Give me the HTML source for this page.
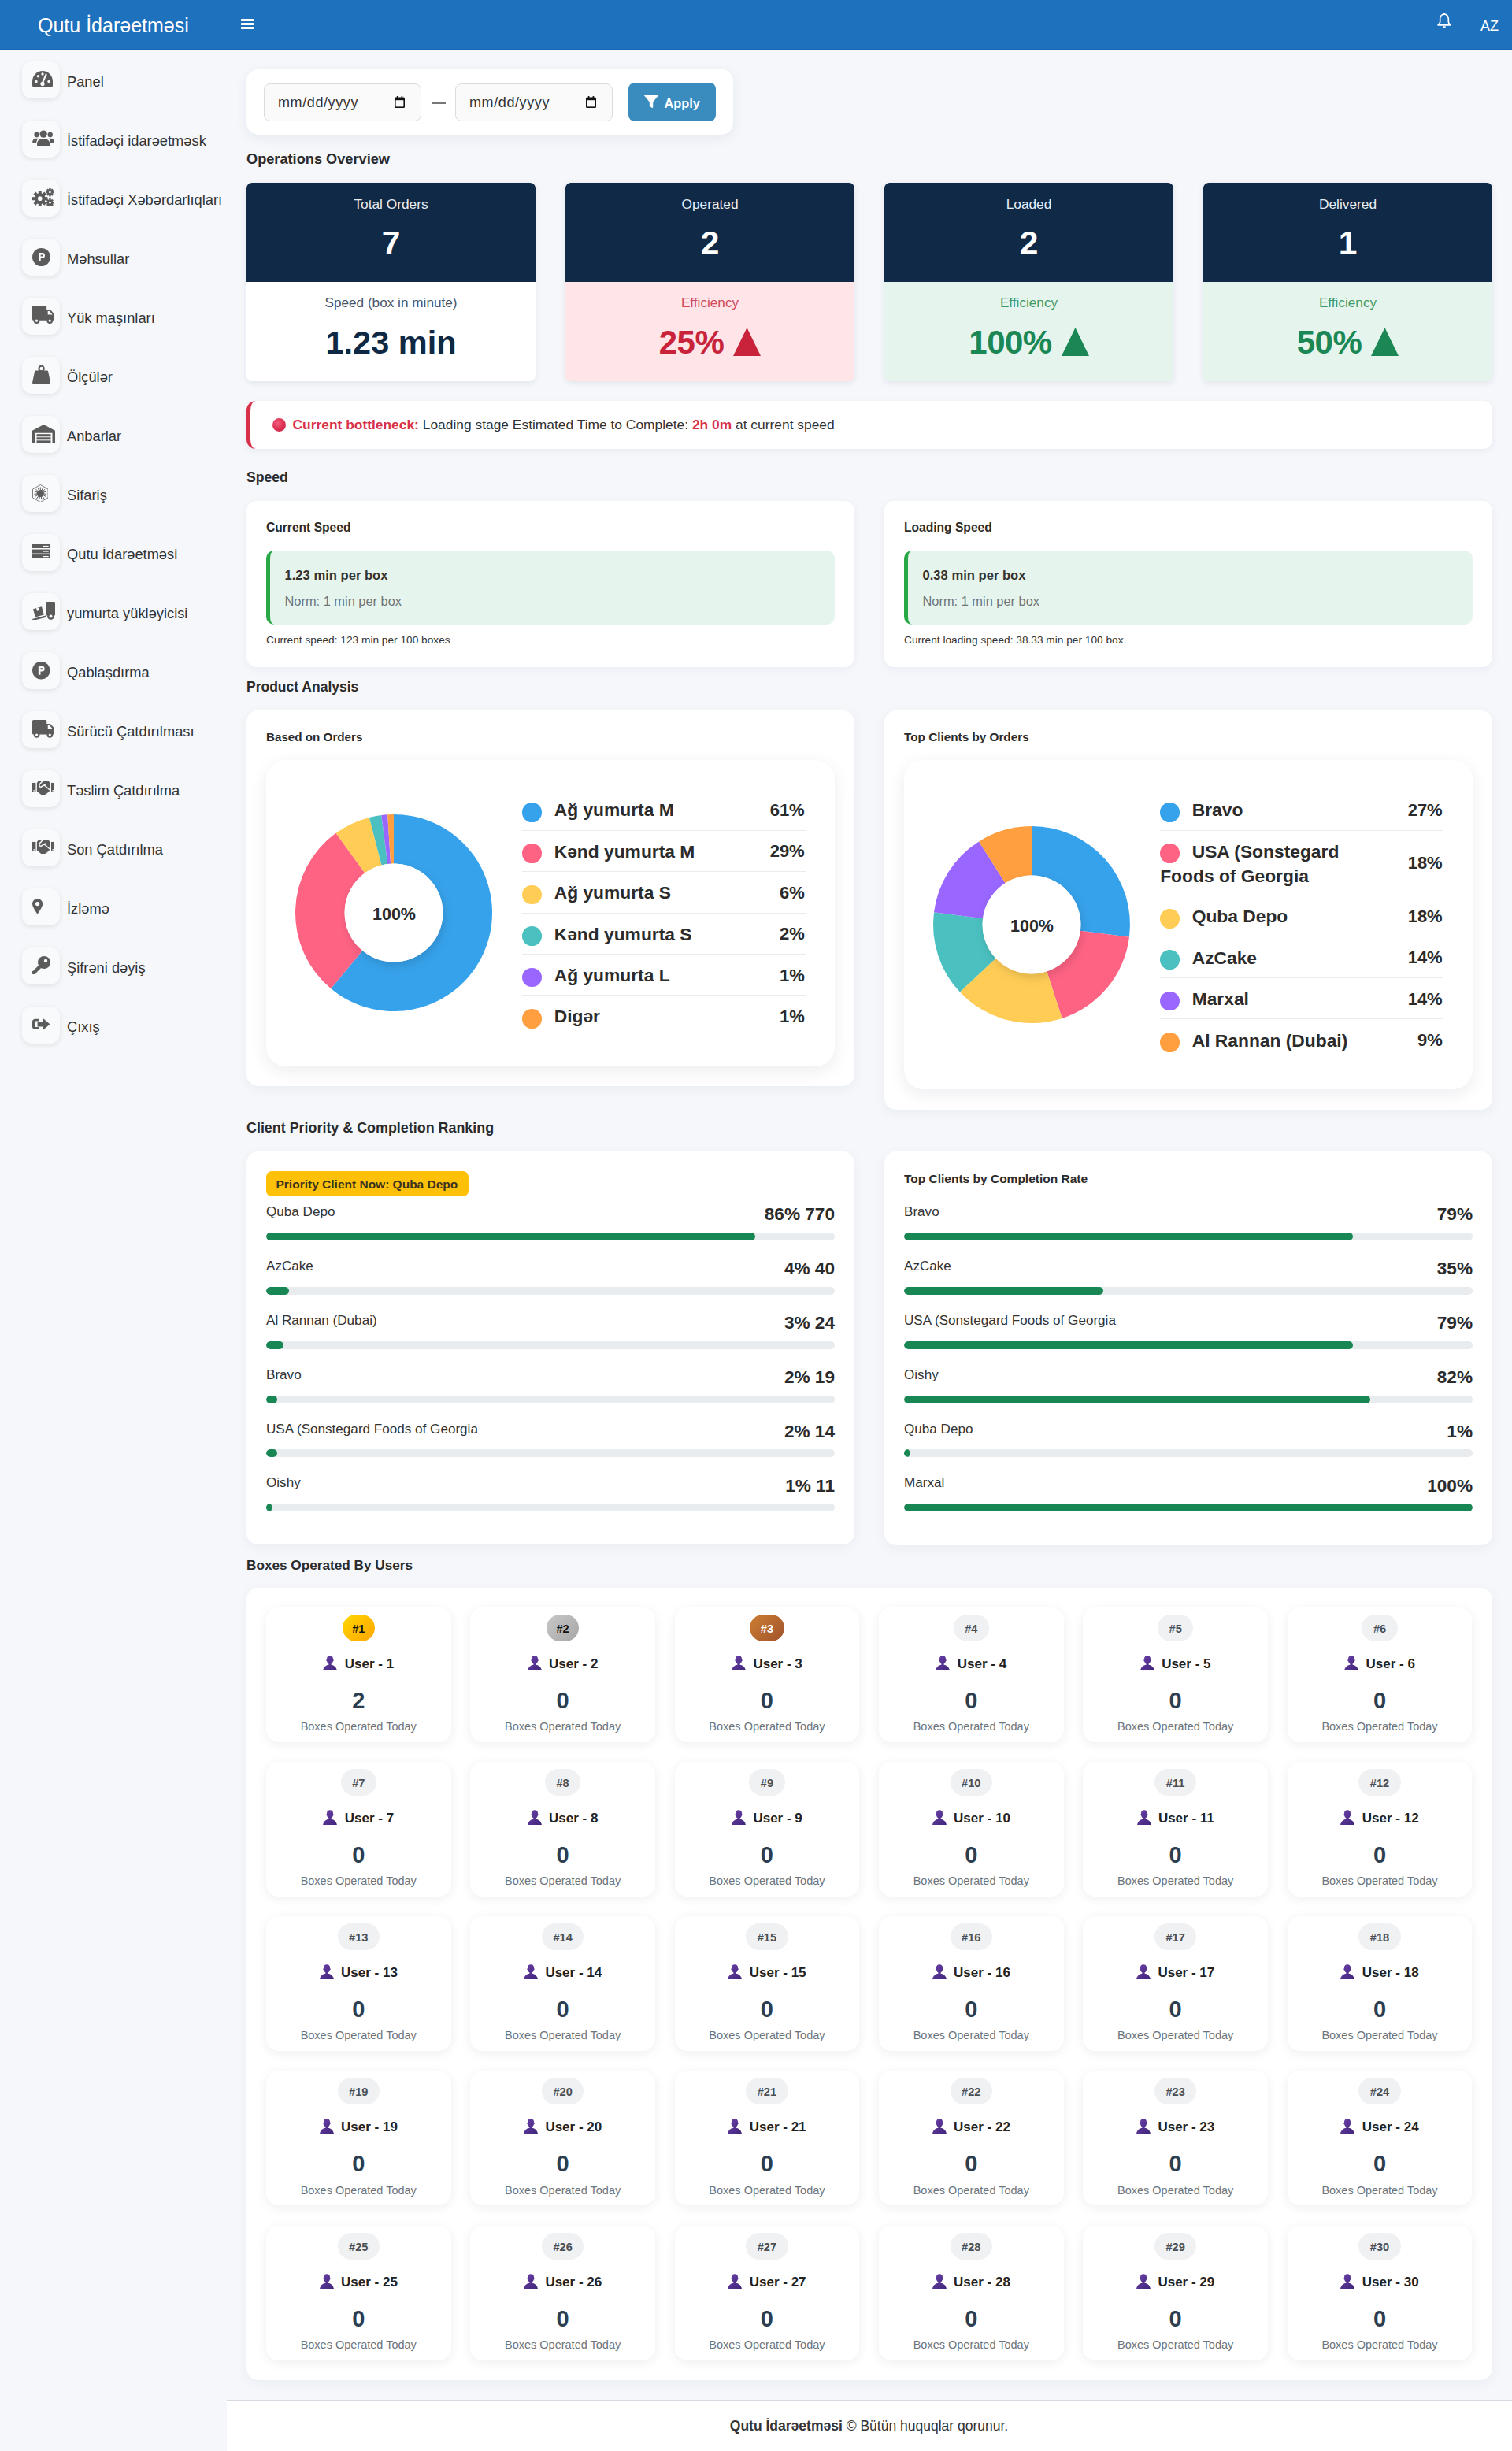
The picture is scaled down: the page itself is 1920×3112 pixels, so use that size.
<!DOCTYPE html>
<html lang="az">
<head>
<meta charset="utf-8">
<title>Qutu İdarəetməsi</title>
<style>
*{box-sizing:border-box;margin:0;padding:0}
html,body{width:1920px;height:3112px;overflow:hidden}
body{background:#f5f7fb;font-family:"Liberation Sans",sans-serif;color:#212529;position:relative}
.abs{position:absolute}
.t{position:absolute;white-space:nowrap}
/* header */
.hdr{position:absolute;left:0;top:0;width:1920px;height:62px;background:#1e71bd;box-shadow:0 1px 0 #1466b3,0 2px 0 #fbfcfd}
.brand{position:absolute;left:48px;top:17px;font-size:25px;color:#fff;line-height:30px;white-space:nowrap}
.burger{position:absolute;left:306px;top:24px;width:16px;height:14px}
.burger i{display:block;height:3px;background:#fff;margin-bottom:2px;border-radius:.5px}
.bell{position:absolute;left:1824px;top:16px;width:20px;height:21px}
.lang{position:absolute;left:1880px;top:23px;font-size:18px;color:#fff;line-height:20px}
/* sidebar */
.side{position:absolute;left:0;top:63px;width:287px;height:3049px}
.nav{position:absolute;left:28px;height:47px;width:260px}
.nav .ib{position:absolute;left:0;top:0;width:47.6px;height:47px;border-radius:12px;background:#f9fafb;box-shadow:0 2px 6px rgba(0,0,0,.09)}
.nav .tx{position:absolute;left:57px;top:15.3px;font-size:18.3px;color:#333;white-space:nowrap;line-height:22px}
/* main */
.card{position:absolute;background:#fff;border-radius:15px;box-shadow:0 4px 14px rgba(20,30,60,.06)}
.h{position:absolute;left:313px;font-size:18px;font-weight:700;color:#2d2d2d;white-space:nowrap;line-height:22px}
</style>
</head>
<body>
<div class="hdr">
  <div class="brand">Qutu İdarəetməsi</div>
  <div class="burger"><i></i><i></i><i></i></div>
  <svg class="bell" viewBox="0 0 20 21"><path d="M10 2.2c-3.2 0-5.3 2.5-5.3 5.6v3.6c0 1.3-.6 2.6-1.8 3.6l-.9.8h16l-.9-.8c-1.2-1-1.8-2.3-1.8-3.6V7.8c0-3.1-2.1-5.6-5.3-5.6z" fill="none" stroke="#fff" stroke-width="1.7" stroke-linejoin="round"/><circle cx="10" cy="1.6" r="1.1" fill="#fff"/><path d="M8 17.2a2 2 0 0 0 4 0z" fill="#fff"/></svg>
  <div class="lang">AZ</div>
</div>

<div id="side"><div class="side">
<div class="nav" style="top:15px"><div class="ib"><svg style="position:absolute;left:12.7px;top:12px" width="26" height="20.6" viewBox="0 0 26 20" preserveAspectRatio="none"><path d="M13 0A13 13 0 0 0 0 13v5a2 2 0 0 0 2 2h22a2 2 0 0 0 2-2v-5A13 13 0 0 0 13 0z" fill="#5b5b5b"/><circle cx="5" cy="13" r="1.7" fill="#f9fafb"/><circle cx="7.5" cy="6.5" r="1.7" fill="#f9fafb"/><circle cx="13" cy="4" r="1.7" fill="#f9fafb"/><circle cx="21" cy="13" r="1.7" fill="#f9fafb"/><path d="M17.5 4.5l-4.2 9.5" stroke="#f9fafb" stroke-width="2.2" stroke-linecap="round"/><circle cx="13" cy="16" r="2.6" fill="#f9fafb"/></svg></div><div class="tx">Panel</div></div>
<div class="nav" style="top:90px"><div class="ib"><svg style="position:absolute;left:12.7px;top:12px" width="28.3" height="20.4" viewBox="0 0 28 20" preserveAspectRatio="none"><circle cx="14" cy="5" r="4.6" fill="#5b5b5b"/><circle cx="5.5" cy="6" r="3.2" fill="#5b5b5b"/><circle cx="22.5" cy="6" r="3.2" fill="#5b5b5b"/><path d="M6 20v-3a6 6 0 0 1 6-6h4a6 6 0 0 1 6 6v3z" fill="#5b5b5b"/><path d="M0 15.5a5 5 0 0 1 5-5h2.5a7 7 0 0 0-2.5 5.5z" fill="#5b5b5b"/><path d="M28 15.5a5 5 0 0 0-5-5h-2.5a7 7 0 0 1 2.5 5.5z" fill="#5b5b5b"/></svg></div><div class="tx">İstifadəçi idarəetməsk</div></div>
<div class="nav" style="top:165px"><div class="ib"><svg style="position:absolute;left:12.7px;top:10.6px" width="28.3" height="23.4" viewBox="0 0 29 23" preserveAspectRatio="none"><g fill="#5b5b5b"><circle cx="10" cy="13" r="7"/><g transform="translate(10 13)"><rect x="-2" y="-10" width="4" height="20"/><rect x="-10" y="-2" width="20" height="4"/><rect x="-2" y="-10" width="4" height="20" transform="rotate(45)"/><rect x="-2" y="-10" width="4" height="20" transform="rotate(-45)"/></g><circle cx="23" cy="5" r="3.6"/><g transform="translate(23 5)"><rect x="-1.3" y="-5.2" width="2.6" height="10.4"/><rect x="-5.2" y="-1.3" width="10.4" height="2.6"/><rect x="-1.3" y="-5.2" width="2.6" height="10.4" transform="rotate(45)"/><rect x="-1.3" y="-5.2" width="2.6" height="10.4" transform="rotate(-45)"/></g><circle cx="23" cy="18" r="3.6"/><g transform="translate(23 18)"><rect x="-1.3" y="-5.2" width="2.6" height="10.4"/><rect x="-5.2" y="-1.3" width="10.4" height="2.6"/><rect x="-1.3" y="-5.2" width="2.6" height="10.4" transform="rotate(45)"/><rect x="-1.3" y="-5.2" width="2.6" height="10.4" transform="rotate(-45)"/></g></g><circle cx="10" cy="13" r="2.8" fill="#f9fafb"/><circle cx="23" cy="5" r="1.4" fill="#f9fafb"/><circle cx="23" cy="18" r="1.4" fill="#f9fafb"/></svg></div><div class="tx">İstifadəçi Xəbərdarlıqları</div></div>
<div class="nav" style="top:240px"><div class="ib"><svg style="position:absolute;left:12.7px;top:12px" width="23" height="23" viewBox="0 0 23 23" preserveAspectRatio="none"><circle cx="11.5" cy="11.5" r="11.5" fill="#5b5b5b"/><path d="M8 17V6h4.6a3.4 3.4 0 0 1 0 6.8H10.7V17z M10.7 8.4v2.1h1.9a1.05 1.05 0 0 0 0-2.1z" fill="#f9fafb" fill-rule="evenodd"/></svg></div><div class="tx">Məhsullar</div></div>
<div class="nav" style="top:315px"><div class="ib"><svg style="position:absolute;left:12.7px;top:10.4px" width="28.3" height="23.2" viewBox="0 0 28 23" preserveAspectRatio="none"><path d="M0 1.5A1.5 1.5 0 0 1 1.5 0h15A1.5 1.5 0 0 1 18 1.5V5h4.5l5.5 6v6.5a1 1 0 0 1-1 1H1.5A1.5 1.5 0 0 1 0 17z" fill="#5b5b5b"/><path d="M19.5 7v4.5h6l-4-4.5z" fill="#f9fafb"/><circle cx="5.5" cy="19" r="3.8" fill="#5b5b5b"/><circle cx="5.5" cy="19" r="1.6" fill="#f9fafb"/><circle cx="22" cy="19" r="3.8" fill="#5b5b5b"/><circle cx="22" cy="19" r="1.6" fill="#f9fafb"/></svg></div><div class="tx">Yük maşınları</div></div>
<div class="nav" style="top:390px"><div class="ib"><svg style="position:absolute;left:12.7px;top:10.9px" width="23.2" height="23.2" viewBox="0 0 24 23" preserveAspectRatio="none"><circle cx="12" cy="4" r="3.3" fill="none" stroke="#5b5b5b" stroke-width="2.2"/><path d="M4.5 6.5h15a1.5 1.5 0 0 1 1.4 1.1L23.8 21a1.6 1.6 0 0 1-1.6 2H1.8A1.6 1.6 0 0 1 .2 21L3.1 7.6a1.5 1.5 0 0 1 1.4-1.1z" fill="#5b5b5b"/></svg></div><div class="tx">Ölçülər</div></div>
<div class="nav" style="top:465px"><div class="ib"><svg style="position:absolute;left:12.7px;top:10.7px" width="29" height="23.4" viewBox="0 0 29 23" preserveAspectRatio="none"><path d="M0 7.5L14.5 0 29 7.5V23h-3.5V10.5h-22V23H0z" fill="#5b5b5b"/><rect x="5.5" y="12" width="18" height="3" fill="#5b5b5b"/><rect x="5.5" y="16" width="18" height="3" fill="#5b5b5b"/><rect x="5.5" y="20" width="18" height="3" fill="#5b5b5b"/></svg></div><div class="tx">Anbarlar</div></div>
<div class="nav" style="top:540px"><div class="ib"><svg style="position:absolute;left:12.7px;top:11.7px" width="20.6" height="23" viewBox="0 0 20.6 23" preserveAspectRatio="none"><path d="M10.3 .5l9.8 5.6v10.8l-9.8 5.6L.5 16.9V6.1z" fill="none" stroke="#5b5b5b" stroke-width="1" opacity=".8"/><circle cx="10.3" cy="11.5" r="4.6" fill="#5b5b5b"/><path d="M10.30 7.50L10.30 3.50" stroke="#5b5b5b" stroke-width="1"/><path d="M11.93 7.85L13.55 4.19" stroke="#5b5b5b" stroke-width="1"/><path d="M13.27 8.82L16.25 6.15" stroke="#5b5b5b" stroke-width="1"/><path d="M14.10 10.26L17.91 9.03" stroke="#5b5b5b" stroke-width="1"/><path d="M14.28 11.92L18.26 12.34" stroke="#5b5b5b" stroke-width="1"/><path d="M13.76 13.50L17.23 15.50" stroke="#5b5b5b" stroke-width="1"/><path d="M12.65 14.74L15.00 17.97" stroke="#5b5b5b" stroke-width="1"/><path d="M11.13 15.41L11.96 19.33" stroke="#5b5b5b" stroke-width="1"/><path d="M9.47 15.41L8.64 19.33" stroke="#5b5b5b" stroke-width="1"/><path d="M7.95 14.74L5.60 17.97" stroke="#5b5b5b" stroke-width="1"/><path d="M6.84 13.50L3.37 15.50" stroke="#5b5b5b" stroke-width="1"/><path d="M6.32 11.92L2.34 12.34" stroke="#5b5b5b" stroke-width="1"/><path d="M6.50 10.26L2.69 9.03" stroke="#5b5b5b" stroke-width="1"/><path d="M7.33 8.82L4.35 6.15" stroke="#5b5b5b" stroke-width="1"/><path d="M8.67 7.85L7.05 4.19" stroke="#5b5b5b" stroke-width="1"/></svg></div><div class="tx">Sifariş</div></div>
<div class="nav" style="top:615px"><div class="ib"><svg style="position:absolute;left:12.7px;top:13px" width="23.6" height="18" viewBox="0 0 24 19" preserveAspectRatio="none"><rect x="0" y="0" width="24" height="5.3" fill="#5b5b5b"/><rect x="0" y="6.9" width="24" height="5.3" fill="#5b5b5b"/><rect x="0" y="13.8" width="24" height="5.3" fill="#5b5b5b"/><rect x="14" y="2" width="7" height="1.3" fill="#f9fafb"/><rect x="14" y="8.9" width="7" height="1.3" fill="#f9fafb"/><rect x="14" y="15.8" width="7" height="1.3" fill="#f9fafb"/></svg></div><div class="tx">Qutu İdarəetməsi</div></div>
<div class="nav" style="top:690px"><div class="ib"><svg style="position:absolute;left:12.7px;top:10.5px" width="29" height="23.4" viewBox="0 0 29 24" preserveAspectRatio="none"><rect x="17" y="0" width="12" height="18" rx="1" fill="#5b5b5b"/><circle cx="23.5" cy="19" r="4.5" fill="#5b5b5b"/><circle cx="23.5" cy="19" r="2" fill="#f9fafb"/><path d="M0 22.5l17-4.5.6 2.2-17 4.5z" fill="#5b5b5b"/><path d="M1 9.5l11-3 2.8 10.5-11 3z" fill="#5b5b5b"/><path d="M5 8.4l3-.8 1 3.6-3 .8z" fill="#f9fafb"/></svg></div><div class="tx">yumurta yükləyicisi</div></div>
<div class="nav" style="top:765px"><div class="ib"><svg style="position:absolute;left:12.7px;top:12px" width="22.5" height="22.5" viewBox="0 0 23 23" preserveAspectRatio="none"><circle cx="11.5" cy="11.5" r="11.5" fill="#5b5b5b"/><path d="M8 17V6h4.6a3.4 3.4 0 0 1 0 6.8H10.7V17z M10.7 8.4v2.1h1.9a1.05 1.05 0 0 0 0-2.1z" fill="#f9fafb" fill-rule="evenodd"/></svg></div><div class="tx">Qablaşdırma</div></div>
<div class="nav" style="top:840px"><div class="ib"><svg style="position:absolute;left:12.7px;top:10.6px" width="28.4" height="23" viewBox="0 0 28 23" preserveAspectRatio="none"><path d="M0 1.5A1.5 1.5 0 0 1 1.5 0h15A1.5 1.5 0 0 1 18 1.5V5h4.5l5.5 6v6.5a1 1 0 0 1-1 1H1.5A1.5 1.5 0 0 1 0 17z" fill="#5b5b5b"/><path d="M19.5 7v4.5h6l-4-4.5z" fill="#f9fafb"/><circle cx="5.5" cy="19" r="3.8" fill="#5b5b5b"/><circle cx="5.5" cy="19" r="1.6" fill="#f9fafb"/><circle cx="22" cy="19" r="3.8" fill="#5b5b5b"/><circle cx="22" cy="19" r="1.6" fill="#f9fafb"/></svg></div><div class="tx">Sürücü Çatdırılması</div></div>
<div class="nav" style="top:915px"><div class="ib"><svg style="position:absolute;left:12.7px;top:13.3px" width="28.4" height="17.7" viewBox="0 0 29 18" preserveAspectRatio="none"><rect x="0" y="3" width="4.5" height="12" fill="#5b5b5b"/><rect x="24.5" y="3" width="4.5" height="12" fill="#5b5b5b"/><rect x="1.5" y="12.3" width="1.4" height="1.6" fill="#f9fafb"/><rect x="26" y="12.3" width="1.4" height="1.6" fill="#f9fafb"/><path d="M8 .6h13l2.3 2.6v9.3l-1.3 1.5-1 .2-.6 1.5-1.2.3-.5 1.3-1.3.3-.7.7H11.6L6 14V3z" fill="#5b5b5b"/><path d="M12.8 1.2L9.2 5.3c-.6 1.6.4 3.2 2.1 3.1l5.5-3.2M16.2 6.6l6.3 5.3" fill="none" stroke="#f9fafb" stroke-width="1.5" stroke-linecap="round"/></svg></div><div class="tx">Təslim Çatdırılma</div></div>
<div class="nav" style="top:990px"><div class="ib"><svg style="position:absolute;left:12.7px;top:13.3px" width="28.4" height="17.7" viewBox="0 0 29 18" preserveAspectRatio="none"><rect x="0" y="3" width="4.5" height="12" fill="#5b5b5b"/><rect x="24.5" y="3" width="4.5" height="12" fill="#5b5b5b"/><rect x="1.5" y="12.3" width="1.4" height="1.6" fill="#f9fafb"/><rect x="26" y="12.3" width="1.4" height="1.6" fill="#f9fafb"/><path d="M8 .6h13l2.3 2.6v9.3l-1.3 1.5-1 .2-.6 1.5-1.2.3-.5 1.3-1.3.3-.7.7H11.6L6 14V3z" fill="#5b5b5b"/><path d="M12.8 1.2L9.2 5.3c-.6 1.6.4 3.2 2.1 3.1l5.5-3.2M16.2 6.6l6.3 5.3" fill="none" stroke="#f9fafb" stroke-width="1.5" stroke-linecap="round"/></svg></div><div class="tx">Son Çatdırılma</div></div>
<div class="nav" style="top:1065px"><div class="ib"><svg style="position:absolute;left:12.7px;top:13px" width="13.2" height="20" viewBox="0 0 15 23" preserveAspectRatio="none"><path d="M7.5 0A7.5 7.5 0 0 0 0 7.5c0 4.5 5.3 11.5 7.5 15.5 2.2-4 7.5-11 7.5-15.5A7.5 7.5 0 0 0 7.5 0z" fill="#5b5b5b"/><circle cx="7.5" cy="7.5" r="3" fill="#f9fafb"/></svg></div><div class="tx">İzləmə</div></div>
<div class="nav" style="top:1140px"><div class="ib"><svg style="position:absolute;left:12.7px;top:10.9px" width="23" height="23" viewBox="0 0 23 23" preserveAspectRatio="none"><circle cx="15" cy="8" r="8" fill="#5b5b5b"/><path d="M9.2 10.6l3.2 3.2L4.6 21.6 3.8 23H.6L0 22.4v-3.2l1.4-.8z" fill="#5b5b5b"/><circle cx="17" cy="6" r="2.2" fill="#f9fafb"/></svg></div><div class="tx">Şifrəni dəyiş</div></div>
<div class="nav" style="top:1215px"><div class="ib"><svg style="position:absolute;left:12.7px;top:14px" width="22.5" height="16.6" viewBox="0 0 24 20" preserveAspectRatio="none"><path d="M8.5 2H4.5A4.5 4.5 0 0 0 0 6.5v7A4.5 4.5 0 0 0 4.5 18h4v-3.5h-4a1 1 0 0 1-1-1v-7a1 1 0 0 1 1-1h4z" fill="#5b5b5b"/><path d="M14 0.5l10 9.5-10 9.5V14H7V6h7z" fill="#5b5b5b"/></svg></div><div class="tx">Çıxış</div></div>
</div></div><!--/side-->

<div id="main"><div class="abs" style="left:313px;top:88px;width:618px;height:83px;background:#fff;border-radius:15px;box-shadow:0 4px 16px rgba(30,40,70,.07)"></div>
<div class="abs" style="left:335px;top:106px;width:200px;height:48px;background:#fafafa;border:1px solid #dcdcdc;border-radius:8px"></div>
<div class="t" style="top:120.46px;font-size:18px;line-height:21.6px;color:#333;letter-spacing:0.6px;left:353px;">mm/dd/yyyy</div>
<div class="abs" style="left:501px;top:122px;width:13px;height:15px;"><svg width="13" height="15" viewBox="0 0 13 15"><rect x="0" y="1.5" width="13" height="13.5" rx="1.5" fill="#111"/><rect x="1.6" y="5.2" width="9.8" height="8.2" fill="#fafafa"/><rect x="2.8" y="0" width="1.6" height="3" fill="#111"/><rect x="8.6" y="0" width="1.6" height="3" fill="#111"/></svg></div>
<div class="abs" style="left:578px;top:106px;width:200px;height:48px;background:#fafafa;border:1px solid #dcdcdc;border-radius:8px"></div>
<div class="t" style="top:120.46px;font-size:18px;line-height:21.6px;color:#333;letter-spacing:0.6px;left:596px;">mm/dd/yyyy</div>
<div class="abs" style="left:744px;top:122px;width:13px;height:15px;"><svg width="13" height="15" viewBox="0 0 13 15"><rect x="0" y="1.5" width="13" height="13.5" rx="1.5" fill="#111"/><rect x="1.6" y="5.2" width="9.8" height="8.2" fill="#fafafa"/><rect x="2.8" y="0" width="1.6" height="3" fill="#111"/><rect x="8.6" y="0" width="1.6" height="3" fill="#111"/></svg></div>
<div class="abs" style="left:548px;top:130px;width:18px;height:1.6px;background:#777"></div>
<div class="abs" style="left:798px;top:105px;width:111px;height:49px;background:#3a8cbe;border-radius:8px"></div>
<div class="abs" style="left:818px;top:120px;width:18px;height:18px;"><svg width="18" height="18" viewBox="0 0 18 18"><path d="M1 0h16a1 1 0 0 1 .8 1.6L11.2 9.5V16a1 1 0 0 1-1.6.8l-2.4-1.8a1 1 0 0 1-.4-.8V9.5L.2 1.6A1 1 0 0 1 1 0z" fill="#fff"/></svg></div>
<div class="t" style="top:122.07px;font-size:16.3px;line-height:19.56px;color:#fff;font-weight:700;left:843.5px;">Apply</div>
<div class="t" style="top:191.77px;font-size:18.2px;line-height:21.84px;color:#2b2b2b;font-weight:700;left:313px;">Operations Overview</div>
<div class="t" style="top:596.14px;font-size:17.6px;line-height:21.12px;color:#2b2b2b;font-weight:700;left:313px;">Speed</div>
<div class="t" style="top:861.94px;font-size:17.5px;line-height:21.0px;color:#2b2b2b;font-weight:700;left:313px;">Product Analysis</div>
<div class="t" style="top:1421.66px;font-size:17.9px;line-height:21.48px;color:#2b2b2b;font-weight:700;left:313px;">Client Priority &amp; Completion Ranking</div>
<div class="t" style="top:1977.02px;font-size:17.2px;line-height:20.64px;color:#2b2b2b;font-weight:700;left:313px;">Boxes Operated By Users</div>
<div class="abs" style="left:313px;top:232px;width:367px;height:252px;background:#fff;border-radius:7px;overflow:hidden;box-shadow:0 2px 8px rgba(20,30,60,.09)"><div class="abs" style="left:0px;top:0px;width:367px;height:126px;background:#0f2946"></div></div>
<div class="t" style="top:249.13px;font-size:17.3px;line-height:20.76px;color:#e8edf3;left:96.5px;width:800px;text-align:center;">Total Orders</div>
<div class="t" style="top:283.27px;font-size:42.5px;line-height:51.0px;color:#fff;font-weight:700;left:96.5px;width:800px;text-align:center;">7</div>
<div class="t" style="top:374.02px;font-size:17.2px;line-height:20.64px;color:#4a5568;left:96.5px;width:800px;text-align:center;">Speed (box in minute)</div>
<div class="t" style="top:409.72px;font-size:41.5px;line-height:49.8px;color:#0f2944;font-weight:700;left:96.5px;width:800px;text-align:center;">1.23 min</div>
<div class="abs" style="left:718px;top:232px;width:367px;height:252px;background:#ffe4e8;border-radius:7px;overflow:hidden;box-shadow:0 2px 8px rgba(20,30,60,.09)"><div class="abs" style="left:0px;top:0px;width:367px;height:126px;background:#0f2946"></div></div>
<div class="t" style="top:249.13px;font-size:17.3px;line-height:20.76px;color:#e8edf3;left:501.5px;width:800px;text-align:center;">Operated</div>
<div class="t" style="top:283.27px;font-size:42.5px;line-height:51.0px;color:#fff;font-weight:700;left:501.5px;width:800px;text-align:center;">2</div>
<div class="t" style="top:374.02px;font-size:17.2px;line-height:20.64px;color:#d1495b;left:501.5px;width:800px;text-align:center;">Efficiency</div>
<div class="abs" style="left:718px;top:409.75px;width:367px;height:50px;display:flex;justify-content:center;align-items:flex-start"><span style="font-size:42px;line-height:50px;font-weight:700;color:#c8233a;letter-spacing:-0.5px;white-space:nowrap">25%</span><svg style="margin-left:12px;margin-top:6.25px" width="35" height="36" viewBox="0 0 35 36"><path d="M17.5 0L35 36H0z" fill="#c8233a"/></svg></div>
<div class="abs" style="left:1123px;top:232px;width:367px;height:252px;background:#e5f5ee;border-radius:7px;overflow:hidden;box-shadow:0 2px 8px rgba(20,30,60,.09)"><div class="abs" style="left:0px;top:0px;width:367px;height:126px;background:#0f2946"></div></div>
<div class="t" style="top:249.13px;font-size:17.3px;line-height:20.76px;color:#e8edf3;left:906.5px;width:800px;text-align:center;">Loaded</div>
<div class="t" style="top:283.27px;font-size:42.5px;line-height:51.0px;color:#fff;font-weight:700;left:906.5px;width:800px;text-align:center;">2</div>
<div class="t" style="top:374.02px;font-size:17.2px;line-height:20.64px;color:#3e9a6a;left:906.5px;width:800px;text-align:center;">Efficiency</div>
<div class="abs" style="left:1123px;top:409.75px;width:367px;height:50px;display:flex;justify-content:center;align-items:flex-start"><span style="font-size:42px;line-height:50px;font-weight:700;color:#1a8754;letter-spacing:-0.5px;white-space:nowrap">100%</span><svg style="margin-left:12px;margin-top:6.25px" width="35" height="36" viewBox="0 0 35 36"><path d="M17.5 0L35 36H0z" fill="#1a8754"/></svg></div>
<div class="abs" style="left:1528px;top:232px;width:367px;height:252px;background:#e5f5ee;border-radius:7px;overflow:hidden;box-shadow:0 2px 8px rgba(20,30,60,.09)"><div class="abs" style="left:0px;top:0px;width:367px;height:126px;background:#0f2946"></div></div>
<div class="t" style="top:249.13px;font-size:17.3px;line-height:20.76px;color:#e8edf3;left:1311.5px;width:800px;text-align:center;">Delivered</div>
<div class="t" style="top:283.27px;font-size:42.5px;line-height:51.0px;color:#fff;font-weight:700;left:1311.5px;width:800px;text-align:center;">1</div>
<div class="t" style="top:374.02px;font-size:17.2px;line-height:20.64px;color:#3e9a6a;left:1311.5px;width:800px;text-align:center;">Efficiency</div>
<div class="abs" style="left:1528px;top:409.75px;width:367px;height:50px;display:flex;justify-content:center;align-items:flex-start"><span style="font-size:42px;line-height:50px;font-weight:700;color:#1a8754;letter-spacing:-0.5px;white-space:nowrap">50%</span><svg style="margin-left:12px;margin-top:6.25px" width="35" height="36" viewBox="0 0 35 36"><path d="M17.5 0L35 36H0z" fill="#1a8754"/></svg></div>
<div class="abs" style="left:313px;top:509px;width:1582px;height:61px;background:#fff;border-radius:12px;border-left:5px solid #d9304a;box-shadow:0 3px 10px rgba(20,30,60,.06)"></div>
<div class="abs" style="left:346px;top:531px;width:17px;height:17px;border-radius:50%;background:radial-gradient(circle at 38% 35%,#f25b78 0%,#dc2f52 55%,#b81f3e 100%)"></div>
<div class="t" style="left:371.5px;top:529.07px;font-size:17.4px;line-height:21px;color:#333;white-space:nowrap"><b style="color:#d9304a">Current bottleneck:</b> Loading stage Estimated Time to Complete: <b style="color:#d9304a">2h 0m</b> at current speed</div>
<div class="abs" style="left:313px;top:636px;width:772px;height:211px;background:#fff;border-radius:13px;box-shadow:0 3px 12px rgba(20,30,60,.05)"></div>
<div class="t" style="top:660.93px;font-size:15.6px;line-height:18.72px;color:#2b2b2b;font-weight:700;left:338px;">Current Speed</div>
<div class="abs" style="left:338px;top:699px;width:722px;height:94px;background:#e5f5ee;border-radius:10px;border-left:5px solid #28a745"></div>
<div class="t" style="top:721.09px;font-size:16.6px;line-height:19.92px;color:#333;font-weight:700;left:361.5px;">1.23 min per box</div>
<div class="t" style="top:754.28px;font-size:16.4px;line-height:19.68px;color:#6c757d;left:361.5px;">Norm: 1 min per box</div>
<div class="t" style="top:804.83px;font-size:13.7px;line-height:16.44px;color:#333;left:338px;">Current speed: 123 min per 100 boxes</div>
<div class="abs" style="left:1123px;top:636px;width:772px;height:211px;background:#fff;border-radius:13px;box-shadow:0 3px 12px rgba(20,30,60,.05)"></div>
<div class="t" style="top:660.93px;font-size:15.6px;line-height:18.72px;color:#2b2b2b;font-weight:700;left:1148px;">Loading Speed</div>
<div class="abs" style="left:1148px;top:699px;width:722px;height:94px;background:#e5f5ee;border-radius:10px;border-left:5px solid #28a745"></div>
<div class="t" style="top:721.09px;font-size:16.6px;line-height:19.92px;color:#333;font-weight:700;left:1171.5px;">0.38 min per box</div>
<div class="t" style="top:754.28px;font-size:16.4px;line-height:19.68px;color:#6c757d;left:1171.5px;">Norm: 1 min per box</div>
<div class="t" style="top:804.83px;font-size:13.7px;line-height:16.44px;color:#333;left:1148px;">Current loading speed: 38.33 min per 100 box.</div>
<div class="abs" style="left:313px;top:902px;width:772px;height:477px;background:#fff;border-radius:15px;box-shadow:0 4px 16px rgba(20,30,60,.05)"></div>
<div class="abs" style="left:1123px;top:902px;width:772px;height:507px;background:#fff;border-radius:15px;box-shadow:0 4px 16px rgba(20,30,60,.05)"></div>
<div class="t" style="top:927.11px;font-size:15.2px;line-height:18.24px;color:#2b2b2b;font-weight:700;left:338px;">Based on Orders</div>
<div class="t" style="top:927.02px;font-size:15.3px;line-height:18.36px;color:#2b2b2b;font-weight:700;left:1148px;">Top Clients by Orders</div>
<div class="abs" style="left:338px;top:965px;width:722px;height:389px;background:#fff;border-radius:25px;box-shadow:0 6px 22px rgba(20,30,60,.08)"></div>
<div class="abs" style="left:1148px;top:965px;width:722px;height:418px;background:#fff;border-radius:25px;box-shadow:0 6px 22px rgba(20,30,60,.08)"></div>
<svg class="abs" style="left:355.00px;top:1013.70px" width="290" height="290" viewBox="0 0 290 290"><defs><filter id="sh" x="-50%" y="-50%" width="200%" height="200%"><feGaussianBlur stdDeviation="6"/></filter></defs><path d="M145.00 20.00A125 125 0 1 1 65.32 241.31L105.22 193.08A62.4 62.4 0 1 0 145.00 82.60Z" fill="#36a2eb"/><path d="M65.32 241.31A125 125 0 0 1 71.53 43.87L108.32 94.52A62.4 62.4 0 0 0 105.22 193.08Z" fill="#ff6384"/><path d="M71.53 43.87A125 125 0 0 1 113.91 23.93L129.48 84.56A62.4 62.4 0 0 0 108.32 94.52Z" fill="#ffcd56"/><path d="M113.91 23.93A125 125 0 0 1 129.33 20.99L137.18 83.09A62.4 62.4 0 0 0 129.48 84.56Z" fill="#4bc0c0"/><path d="M129.33 20.99A125 125 0 0 1 137.15 20.25L141.08 82.72A62.4 62.4 0 0 0 137.18 83.09Z" fill="#9966ff"/><path d="M137.15 20.25A125 125 0 0 1 145.00 20.00L145.00 82.60A62.4 62.4 0 0 0 141.08 82.72Z" fill="#ff9f40"/><circle cx="147.0" cy="150.0" r="62.4" fill="rgba(0,0,0,.13)" filter="url(#sh)"/><circle cx="145.0" cy="145.0" r="62.4" fill="#fff"/></svg>
<svg class="abs" style="left:1165.00px;top:1029.00px" width="290" height="290" viewBox="0 0 290 290"><defs><filter id="sh" x="-50%" y="-50%" width="200%" height="200%"><feGaussianBlur stdDeviation="6"/></filter></defs><path d="M145.00 20.00A125 125 0 0 1 269.01 160.67L206.91 152.82A62.4 62.4 0 0 0 145.00 82.60Z" fill="#36a2eb"/><path d="M269.01 160.67A125 125 0 0 1 183.63 263.88L164.28 204.35A62.4 62.4 0 0 0 206.91 152.82Z" fill="#ff6384"/><path d="M183.63 263.88A125 125 0 0 1 53.88 230.57L99.51 187.72A62.4 62.4 0 0 0 164.28 204.35Z" fill="#ffcd56"/><path d="M53.88 230.57A125 125 0 0 1 20.99 129.33L83.09 137.18A62.4 62.4 0 0 0 99.51 187.72Z" fill="#4bc0c0"/><path d="M20.99 129.33A125 125 0 0 1 78.02 39.46L111.56 92.31A62.4 62.4 0 0 0 83.09 137.18Z" fill="#9966ff"/><path d="M78.02 39.46A125 125 0 0 1 145.00 20.00L145.00 82.60A62.4 62.4 0 0 0 111.56 92.31Z" fill="#ff9f40"/><circle cx="147.0" cy="150.0" r="62.4" fill="rgba(0,0,0,.13)" filter="url(#sh)"/><circle cx="145.0" cy="145.0" r="62.4" fill="#fff"/></svg>
<div class="t" style="top:1148.85px;font-size:21.5px;line-height:25.8px;color:#2b2b2b;font-weight:700;left:100.5px;width:800px;text-align:center;">100%</div>
<div class="t" style="top:1164.15px;font-size:21.5px;line-height:25.8px;color:#2b2b2b;font-weight:700;left:910.5px;width:800px;text-align:center;">100%</div>
<div class="abs" style="left:663.2px;top:1019.00px;width:24.6px;height:24.6px;border-radius:50%;background:#36a2eb"></div>
<div class="t" style="top:1015.32px;font-size:22.8px;line-height:27.36px;color:#2b2b2b;font-weight:700;left:703.7px;">Ağ yumurta M</div>
<div class="t" style="top:1016.08px;font-size:22px;line-height:26.4px;color:#2b2b2b;font-weight:700;left:221.70000000000005px;width:800px;text-align:right;">61%</div>
<div class="abs" style="left:663px;top:1053.7px;width:360px;height:1px;background:#ebebeb"></div>
<div class="abs" style="left:663.2px;top:1071.40px;width:24.6px;height:24.6px;border-radius:50%;background:#ff6384"></div>
<div class="t" style="top:1067.72px;font-size:22.8px;line-height:27.36px;color:#2b2b2b;font-weight:700;left:703.7px;">Kənd yumurta M</div>
<div class="t" style="top:1068.48px;font-size:22px;line-height:26.4px;color:#2b2b2b;font-weight:700;left:221.70000000000005px;width:800px;text-align:right;">29%</div>
<div class="abs" style="left:663px;top:1106.1000000000001px;width:360px;height:1px;background:#ebebeb"></div>
<div class="abs" style="left:663.2px;top:1123.80px;width:24.6px;height:24.6px;border-radius:50%;background:#ffcd56"></div>
<div class="t" style="top:1120.12px;font-size:22.8px;line-height:27.36px;color:#2b2b2b;font-weight:700;left:703.7px;">Ağ yumurta S</div>
<div class="t" style="top:1120.88px;font-size:22px;line-height:26.4px;color:#2b2b2b;font-weight:700;left:221.70000000000005px;width:800px;text-align:right;">6%</div>
<div class="abs" style="left:663px;top:1158.5px;width:360px;height:1px;background:#ebebeb"></div>
<div class="abs" style="left:663.2px;top:1176.20px;width:24.6px;height:24.6px;border-radius:50%;background:#4bc0c0"></div>
<div class="t" style="top:1172.52px;font-size:22.8px;line-height:27.36px;color:#2b2b2b;font-weight:700;left:703.7px;">Kənd yumurta S</div>
<div class="t" style="top:1173.28px;font-size:22px;line-height:26.4px;color:#2b2b2b;font-weight:700;left:221.70000000000005px;width:800px;text-align:right;">2%</div>
<div class="abs" style="left:663px;top:1210.9px;width:360px;height:1px;background:#ebebeb"></div>
<div class="abs" style="left:663.2px;top:1228.60px;width:24.6px;height:24.6px;border-radius:50%;background:#9966ff"></div>
<div class="t" style="top:1224.92px;font-size:22.8px;line-height:27.36px;color:#2b2b2b;font-weight:700;left:703.7px;">Ağ yumurta L</div>
<div class="t" style="top:1225.68px;font-size:22px;line-height:26.4px;color:#2b2b2b;font-weight:700;left:221.70000000000005px;width:800px;text-align:right;">1%</div>
<div class="abs" style="left:663px;top:1263.3px;width:360px;height:1px;background:#ebebeb"></div>
<div class="abs" style="left:663.2px;top:1281.00px;width:24.6px;height:24.6px;border-radius:50%;background:#ff9f40"></div>
<div class="t" style="top:1277.32px;font-size:22.8px;line-height:27.36px;color:#2b2b2b;font-weight:700;left:703.7px;">Digər</div>
<div class="t" style="top:1278.08px;font-size:22px;line-height:26.4px;color:#2b2b2b;font-weight:700;left:221.70000000000005px;width:800px;text-align:right;">1%</div>
<div class="abs" style="left:1473.2px;top:1019.00px;width:24.6px;height:24.6px;border-radius:50%;background:#36a2eb"></div>
<div class="t" style="top:1015.32px;font-size:22.8px;line-height:27.36px;color:#2b2b2b;font-weight:700;left:1513.7px;">Bravo</div>
<div class="t" style="top:1016.08px;font-size:22px;line-height:26.4px;color:#2b2b2b;font-weight:700;left:1031.7px;width:800px;text-align:right;">27%</div>
<div class="abs" style="left:1473.2px;top:1071.10px;width:24.6px;height:24.6px;border-radius:50%;background:#ff6384"></div>
<div class="t" style="top:1067.72px;font-size:22.8px;line-height:27.36px;color:#2b2b2b;font-weight:700;left:1513.7px;">USA (Sonstegard</div>
<div class="t" style="top:1098.92px;font-size:22.8px;line-height:27.36px;color:#2b2b2b;font-weight:700;left:1473.2px;">Foods of Georgia</div>
<div class="t" style="top:1083.48px;font-size:22px;line-height:26.4px;color:#2b2b2b;font-weight:700;left:1031.7px;width:800px;text-align:right;">18%</div>
<div class="abs" style="left:1473.2px;top:1154.00px;width:24.6px;height:24.6px;border-radius:50%;background:#ffcd56"></div>
<div class="t" style="top:1150.32px;font-size:22.8px;line-height:27.36px;color:#2b2b2b;font-weight:700;left:1513.7px;">Quba Depo</div>
<div class="t" style="top:1151.08px;font-size:22px;line-height:26.4px;color:#2b2b2b;font-weight:700;left:1031.7px;width:800px;text-align:right;">18%</div>
<div class="abs" style="left:1473.2px;top:1206.40px;width:24.6px;height:24.6px;border-radius:50%;background:#4bc0c0"></div>
<div class="t" style="top:1202.72px;font-size:22.8px;line-height:27.36px;color:#2b2b2b;font-weight:700;left:1513.7px;">AzCake</div>
<div class="t" style="top:1203.48px;font-size:22px;line-height:26.4px;color:#2b2b2b;font-weight:700;left:1031.7px;width:800px;text-align:right;">14%</div>
<div class="abs" style="left:1473.2px;top:1258.80px;width:24.6px;height:24.6px;border-radius:50%;background:#9966ff"></div>
<div class="t" style="top:1255.12px;font-size:22.8px;line-height:27.36px;color:#2b2b2b;font-weight:700;left:1513.7px;">Marxal</div>
<div class="t" style="top:1255.88px;font-size:22px;line-height:26.4px;color:#2b2b2b;font-weight:700;left:1031.7px;width:800px;text-align:right;">14%</div>
<div class="abs" style="left:1473.2px;top:1311.20px;width:24.6px;height:24.6px;border-radius:50%;background:#ff9f40"></div>
<div class="t" style="top:1307.52px;font-size:22.8px;line-height:27.36px;color:#2b2b2b;font-weight:700;left:1513.7px;">Al Rannan (Dubai)</div>
<div class="t" style="top:1308.28px;font-size:22px;line-height:26.4px;color:#2b2b2b;font-weight:700;left:1031.7px;width:800px;text-align:right;">9%</div>
<div class="abs" style="left:1473px;top:1053.7px;width:360px;height:1px;background:#ebebeb"></div>
<div class="abs" style="left:1473px;top:1135.7px;width:360px;height:1px;background:#ebebeb"></div>
<div class="abs" style="left:1473px;top:1188.1px;width:360px;height:1px;background:#ebebeb"></div>
<div class="abs" style="left:1473px;top:1240.5px;width:360px;height:1px;background:#ebebeb"></div>
<div class="abs" style="left:1473px;top:1292.9px;width:360px;height:1px;background:#ebebeb"></div>
<div class="abs" style="left:313px;top:1462px;width:772px;height:499px;background:#fff;border-radius:15px;box-shadow:0 4px 16px rgba(20,30,60,.05)"></div>
<div class="abs" style="left:1123px;top:1462px;width:772px;height:500px;background:#fff;border-radius:15px;box-shadow:0 4px 16px rgba(20,30,60,.05)"></div>
<div class="abs" style="left:338px;top:1487px;width:257px;height:31.5px;background:#ffc107;border-radius:7px"></div>
<div class="t" style="top:1495.33px;font-size:15.5px;line-height:18.6px;color:#3a3320;font-weight:700;left:350.5px;">Priority Client Now: Quba Depo</div>
<div class="t" style="top:1487.73px;font-size:15.5px;line-height:18.6px;color:#2b2b2b;font-weight:700;left:1148px;">Top Clients by Completion Rate</div>
<div class="t" style="top:1529.11px;font-size:17.1px;line-height:20.52px;color:#333;left:338px;">Quba Depo</div>
<div class="t" style="top:1528.41px;font-size:22.6px;line-height:27.12px;color:#2b2b2b;font-weight:700;left:260px;width:800px;text-align:right;">86% 770</div>
<div class="abs" style="left:338px;top:1565.0px;width:722px;height:10px;background:#e9ecef;border-radius:5px;overflow:hidden"><div style="width:620.9px;height:10px;background:#198754;border-radius:5px"></div></div>
<div class="t" style="top:1597.96px;font-size:17.1px;line-height:20.52px;color:#333;left:338px;">AzCake</div>
<div class="t" style="top:1597.26px;font-size:22.6px;line-height:27.12px;color:#2b2b2b;font-weight:700;left:260px;width:800px;text-align:right;">4% 40</div>
<div class="abs" style="left:338px;top:1633.85px;width:722px;height:10px;background:#e9ecef;border-radius:5px;overflow:hidden"><div style="width:28.9px;height:10px;background:#198754;border-radius:5px"></div></div>
<div class="t" style="top:1666.81px;font-size:17.1px;line-height:20.52px;color:#333;left:338px;">Al Rannan (Dubai)</div>
<div class="t" style="top:1666.11px;font-size:22.6px;line-height:27.12px;color:#2b2b2b;font-weight:700;left:260px;width:800px;text-align:right;">3% 24</div>
<div class="abs" style="left:338px;top:1702.7px;width:722px;height:10px;background:#e9ecef;border-radius:5px;overflow:hidden"><div style="width:21.7px;height:10px;background:#198754;border-radius:5px"></div></div>
<div class="t" style="top:1735.66px;font-size:17.1px;line-height:20.52px;color:#333;left:338px;">Bravo</div>
<div class="t" style="top:1734.96px;font-size:22.6px;line-height:27.12px;color:#2b2b2b;font-weight:700;left:260px;width:800px;text-align:right;">2% 19</div>
<div class="abs" style="left:338px;top:1771.55px;width:722px;height:10px;background:#e9ecef;border-radius:5px;overflow:hidden"><div style="width:14.4px;height:10px;background:#198754;border-radius:5px"></div></div>
<div class="t" style="top:1804.51px;font-size:17.1px;line-height:20.52px;color:#333;left:338px;">USA (Sonstegard Foods of Georgia</div>
<div class="t" style="top:1803.81px;font-size:22.6px;line-height:27.12px;color:#2b2b2b;font-weight:700;left:260px;width:800px;text-align:right;">2% 14</div>
<div class="abs" style="left:338px;top:1840.4px;width:722px;height:10px;background:#e9ecef;border-radius:5px;overflow:hidden"><div style="width:14.4px;height:10px;background:#198754;border-radius:5px"></div></div>
<div class="t" style="top:1873.36px;font-size:17.1px;line-height:20.52px;color:#333;left:338px;">Oishy</div>
<div class="t" style="top:1872.66px;font-size:22.6px;line-height:27.12px;color:#2b2b2b;font-weight:700;left:260px;width:800px;text-align:right;">1% 11</div>
<div class="abs" style="left:338px;top:1909.25px;width:722px;height:10px;background:#e9ecef;border-radius:5px;overflow:hidden"><div style="width:7.2px;height:10px;background:#198754;border-radius:5px"></div></div>
<div class="t" style="top:1529.11px;font-size:17.1px;line-height:20.52px;color:#333;left:1148px;">Bravo</div>
<div class="t" style="top:1528.41px;font-size:22.6px;line-height:27.12px;color:#2b2b2b;font-weight:700;left:1070px;width:800px;text-align:right;">79%</div>
<div class="abs" style="left:1148px;top:1565.0px;width:722px;height:10px;background:#e9ecef;border-radius:5px;overflow:hidden"><div style="width:570.4px;height:10px;background:#198754;border-radius:5px"></div></div>
<div class="t" style="top:1597.96px;font-size:17.1px;line-height:20.52px;color:#333;left:1148px;">AzCake</div>
<div class="t" style="top:1597.26px;font-size:22.6px;line-height:27.12px;color:#2b2b2b;font-weight:700;left:1070px;width:800px;text-align:right;">35%</div>
<div class="abs" style="left:1148px;top:1633.85px;width:722px;height:10px;background:#e9ecef;border-radius:5px;overflow:hidden"><div style="width:252.7px;height:10px;background:#198754;border-radius:5px"></div></div>
<div class="t" style="top:1666.81px;font-size:17.1px;line-height:20.52px;color:#333;left:1148px;">USA (Sonstegard Foods of Georgia</div>
<div class="t" style="top:1666.11px;font-size:22.6px;line-height:27.12px;color:#2b2b2b;font-weight:700;left:1070px;width:800px;text-align:right;">79%</div>
<div class="abs" style="left:1148px;top:1702.7px;width:722px;height:10px;background:#e9ecef;border-radius:5px;overflow:hidden"><div style="width:570.4px;height:10px;background:#198754;border-radius:5px"></div></div>
<div class="t" style="top:1735.66px;font-size:17.1px;line-height:20.52px;color:#333;left:1148px;">Oishy</div>
<div class="t" style="top:1734.96px;font-size:22.6px;line-height:27.12px;color:#2b2b2b;font-weight:700;left:1070px;width:800px;text-align:right;">82%</div>
<div class="abs" style="left:1148px;top:1771.55px;width:722px;height:10px;background:#e9ecef;border-radius:5px;overflow:hidden"><div style="width:592.0px;height:10px;background:#198754;border-radius:5px"></div></div>
<div class="t" style="top:1804.51px;font-size:17.1px;line-height:20.52px;color:#333;left:1148px;">Quba Depo</div>
<div class="t" style="top:1803.81px;font-size:22.6px;line-height:27.12px;color:#2b2b2b;font-weight:700;left:1070px;width:800px;text-align:right;">1%</div>
<div class="abs" style="left:1148px;top:1840.4px;width:722px;height:10px;background:#e9ecef;border-radius:5px;overflow:hidden"><div style="width:7.2px;height:10px;background:#198754;border-radius:5px"></div></div>
<div class="t" style="top:1873.36px;font-size:17.1px;line-height:20.52px;color:#333;left:1148px;">Marxal</div>
<div class="t" style="top:1872.66px;font-size:22.6px;line-height:27.12px;color:#2b2b2b;font-weight:700;left:1070px;width:800px;text-align:right;">100%</div>
<div class="abs" style="left:1148px;top:1909.25px;width:722px;height:10px;background:#e9ecef;border-radius:5px;overflow:hidden"><div style="width:722.0px;height:10px;background:#198754;border-radius:5px"></div></div>
<div class="abs" style="left:313px;top:2016px;width:1582px;height:1006px;background:#fff;border-radius:15px;box-shadow:0 4px 16px rgba(20,30,60,.05)"></div>
<div class="abs" style="left:338.0px;top:2040.8px;width:234.5px;height:171px;background:#fff;border-radius:16px;box-shadow:0 3px 14px rgba(20,30,60,.07)"></div>
<div class="abs" style="left:338.00px;top:2049.80px;width:234.5px;height:34px;display:flex;justify-content:center"><div style="height:34px;padding:0 12.6px;border-radius:17px;background:linear-gradient(135deg,#ffd700,#ffa500);color:#111;font-size:14.6px;font-weight:700;line-height:36px">#1</div></div>
<div class="abs" style="left:338.00px;top:2101.80px;width:234.5px;height:22px;display:flex;justify-content:center;align-items:flex-start"><svg width="18" height="19" viewBox="0 0 18 19"><defs><linearGradient id="pg" x1="0" y1="0" x2="1" y2="1"><stop offset="0" stop-color="#6b40a8"/><stop offset="1" stop-color="#40257a"/></linearGradient></defs><path d="M9 .3c2.5 0 4 1.5 4 3.9v1.1c.6.1.8.5.7 1.1-.1.5-.4.8-.8.9-.4 1.4-1.3 2.6-2.3 3.2v1.3c3.8.6 6.6 3.3 7.3 7.2H.1c.7-3.9 3.5-6.6 7.3-7.2v-1.3c-1-.6-1.9-1.8-2.3-3.2-.4-.1-.7-.4-.8-.9-.1-.6.1-1 .7-1.1V4.2C5 1.8 6.5.3 9 .3z" fill="url(#pg)"/></svg><span style="margin-left:9.4px;font-size:17px;font-weight:700;line-height:22px;color:#222;white-space:nowrap;margin-top:0px">User - 1</span></div>
<div class="t" style="top:2141.75px;font-size:29px;line-height:34.8px;color:#2c3e50;font-weight:700;left:55.25px;width:800px;text-align:center;">2</div>
<div class="t" style="top:2184.08px;font-size:14.5px;line-height:17.4px;color:#6c757d;left:55.25px;width:800px;text-align:center;">Boxes Operated Today</div>
<div class="abs" style="left:597.35px;top:2040.8px;width:234.5px;height:171px;background:#fff;border-radius:16px;box-shadow:0 3px 14px rgba(20,30,60,.07)"></div>
<div class="abs" style="left:597.35px;top:2049.80px;width:234.5px;height:34px;display:flex;justify-content:center"><div style="height:34px;padding:0 12.6px;border-radius:17px;background:linear-gradient(135deg,#c8c8c8,#a6a6a6);color:#111;font-size:14.6px;font-weight:700;line-height:36px">#2</div></div>
<div class="abs" style="left:597.35px;top:2101.80px;width:234.5px;height:22px;display:flex;justify-content:center;align-items:flex-start"><svg width="18" height="19" viewBox="0 0 18 19"><defs><linearGradient id="pg" x1="0" y1="0" x2="1" y2="1"><stop offset="0" stop-color="#6b40a8"/><stop offset="1" stop-color="#40257a"/></linearGradient></defs><path d="M9 .3c2.5 0 4 1.5 4 3.9v1.1c.6.1.8.5.7 1.1-.1.5-.4.8-.8.9-.4 1.4-1.3 2.6-2.3 3.2v1.3c3.8.6 6.6 3.3 7.3 7.2H.1c.7-3.9 3.5-6.6 7.3-7.2v-1.3c-1-.6-1.9-1.8-2.3-3.2-.4-.1-.7-.4-.8-.9-.1-.6.1-1 .7-1.1V4.2C5 1.8 6.5.3 9 .3z" fill="url(#pg)"/></svg><span style="margin-left:9.4px;font-size:17px;font-weight:700;line-height:22px;color:#222;white-space:nowrap;margin-top:0px">User - 2</span></div>
<div class="t" style="top:2141.75px;font-size:29px;line-height:34.8px;color:#2c3e50;font-weight:700;left:314.6px;width:800px;text-align:center;">0</div>
<div class="t" style="top:2184.08px;font-size:14.5px;line-height:17.4px;color:#6c757d;left:314.6px;width:800px;text-align:center;">Boxes Operated Today</div>
<div class="abs" style="left:856.7px;top:2040.8px;width:234.5px;height:171px;background:#fff;border-radius:16px;box-shadow:0 3px 14px rgba(20,30,60,.07)"></div>
<div class="abs" style="left:856.70px;top:2049.80px;width:234.5px;height:34px;display:flex;justify-content:center"><div style="height:34px;padding:0 12.6px;border-radius:17px;background:linear-gradient(135deg,#cd7f32,#a0522d);color:#fff;padding:0 14px;font-size:14.6px;font-weight:700;line-height:36px">#3</div></div>
<div class="abs" style="left:856.70px;top:2101.80px;width:234.5px;height:22px;display:flex;justify-content:center;align-items:flex-start"><svg width="18" height="19" viewBox="0 0 18 19"><defs><linearGradient id="pg" x1="0" y1="0" x2="1" y2="1"><stop offset="0" stop-color="#6b40a8"/><stop offset="1" stop-color="#40257a"/></linearGradient></defs><path d="M9 .3c2.5 0 4 1.5 4 3.9v1.1c.6.1.8.5.7 1.1-.1.5-.4.8-.8.9-.4 1.4-1.3 2.6-2.3 3.2v1.3c3.8.6 6.6 3.3 7.3 7.2H.1c.7-3.9 3.5-6.6 7.3-7.2v-1.3c-1-.6-1.9-1.8-2.3-3.2-.4-.1-.7-.4-.8-.9-.1-.6.1-1 .7-1.1V4.2C5 1.8 6.5.3 9 .3z" fill="url(#pg)"/></svg><span style="margin-left:9.4px;font-size:17px;font-weight:700;line-height:22px;color:#222;white-space:nowrap;margin-top:0px">User - 3</span></div>
<div class="t" style="top:2141.75px;font-size:29px;line-height:34.8px;color:#2c3e50;font-weight:700;left:573.95px;width:800px;text-align:center;">0</div>
<div class="t" style="top:2184.08px;font-size:14.5px;line-height:17.4px;color:#6c757d;left:573.95px;width:800px;text-align:center;">Boxes Operated Today</div>
<div class="abs" style="left:1116.05px;top:2040.8px;width:234.5px;height:171px;background:#fff;border-radius:16px;box-shadow:0 3px 14px rgba(20,30,60,.07)"></div>
<div class="abs" style="left:1116.05px;top:2049.80px;width:234.5px;height:34px;display:flex;justify-content:center"><div style="height:34px;padding:0 12.6px;border-radius:17px;background:#f0f1f3;color:#4a4f55;padding:0 14.5px;font-size:14.6px;font-weight:700;line-height:36px">#4</div></div>
<div class="abs" style="left:1116.05px;top:2101.80px;width:234.5px;height:22px;display:flex;justify-content:center;align-items:flex-start"><svg width="18" height="19" viewBox="0 0 18 19"><defs><linearGradient id="pg" x1="0" y1="0" x2="1" y2="1"><stop offset="0" stop-color="#6b40a8"/><stop offset="1" stop-color="#40257a"/></linearGradient></defs><path d="M9 .3c2.5 0 4 1.5 4 3.9v1.1c.6.1.8.5.7 1.1-.1.5-.4.8-.8.9-.4 1.4-1.3 2.6-2.3 3.2v1.3c3.8.6 6.6 3.3 7.3 7.2H.1c.7-3.9 3.5-6.6 7.3-7.2v-1.3c-1-.6-1.9-1.8-2.3-3.2-.4-.1-.7-.4-.8-.9-.1-.6.1-1 .7-1.1V4.2C5 1.8 6.5.3 9 .3z" fill="url(#pg)"/></svg><span style="margin-left:9.4px;font-size:17px;font-weight:700;line-height:22px;color:#222;white-space:nowrap;margin-top:0px">User - 4</span></div>
<div class="t" style="top:2141.75px;font-size:29px;line-height:34.8px;color:#2c3e50;font-weight:700;left:833.3000000000002px;width:800px;text-align:center;">0</div>
<div class="t" style="top:2184.08px;font-size:14.5px;line-height:17.4px;color:#6c757d;left:833.3000000000002px;width:800px;text-align:center;">Boxes Operated Today</div>
<div class="abs" style="left:1375.4px;top:2040.8px;width:234.5px;height:171px;background:#fff;border-radius:16px;box-shadow:0 3px 14px rgba(20,30,60,.07)"></div>
<div class="abs" style="left:1375.40px;top:2049.80px;width:234.5px;height:34px;display:flex;justify-content:center"><div style="height:34px;padding:0 12.6px;border-radius:17px;background:#f0f1f3;color:#4a4f55;padding:0 14.5px;font-size:14.6px;font-weight:700;line-height:36px">#5</div></div>
<div class="abs" style="left:1375.40px;top:2101.80px;width:234.5px;height:22px;display:flex;justify-content:center;align-items:flex-start"><svg width="18" height="19" viewBox="0 0 18 19"><defs><linearGradient id="pg" x1="0" y1="0" x2="1" y2="1"><stop offset="0" stop-color="#6b40a8"/><stop offset="1" stop-color="#40257a"/></linearGradient></defs><path d="M9 .3c2.5 0 4 1.5 4 3.9v1.1c.6.1.8.5.7 1.1-.1.5-.4.8-.8.9-.4 1.4-1.3 2.6-2.3 3.2v1.3c3.8.6 6.6 3.3 7.3 7.2H.1c.7-3.9 3.5-6.6 7.3-7.2v-1.3c-1-.6-1.9-1.8-2.3-3.2-.4-.1-.7-.4-.8-.9-.1-.6.1-1 .7-1.1V4.2C5 1.8 6.5.3 9 .3z" fill="url(#pg)"/></svg><span style="margin-left:9.4px;font-size:17px;font-weight:700;line-height:22px;color:#222;white-space:nowrap;margin-top:0px">User - 5</span></div>
<div class="t" style="top:2141.75px;font-size:29px;line-height:34.8px;color:#2c3e50;font-weight:700;left:1092.65px;width:800px;text-align:center;">0</div>
<div class="t" style="top:2184.08px;font-size:14.5px;line-height:17.4px;color:#6c757d;left:1092.65px;width:800px;text-align:center;">Boxes Operated Today</div>
<div class="abs" style="left:1634.75px;top:2040.8px;width:234.5px;height:171px;background:#fff;border-radius:16px;box-shadow:0 3px 14px rgba(20,30,60,.07)"></div>
<div class="abs" style="left:1634.75px;top:2049.80px;width:234.5px;height:34px;display:flex;justify-content:center"><div style="height:34px;padding:0 12.6px;border-radius:17px;background:#f0f1f3;color:#4a4f55;padding:0 14.5px;font-size:14.6px;font-weight:700;line-height:36px">#6</div></div>
<div class="abs" style="left:1634.75px;top:2101.80px;width:234.5px;height:22px;display:flex;justify-content:center;align-items:flex-start"><svg width="18" height="19" viewBox="0 0 18 19"><defs><linearGradient id="pg" x1="0" y1="0" x2="1" y2="1"><stop offset="0" stop-color="#6b40a8"/><stop offset="1" stop-color="#40257a"/></linearGradient></defs><path d="M9 .3c2.5 0 4 1.5 4 3.9v1.1c.6.1.8.5.7 1.1-.1.5-.4.8-.8.9-.4 1.4-1.3 2.6-2.3 3.2v1.3c3.8.6 6.6 3.3 7.3 7.2H.1c.7-3.9 3.5-6.6 7.3-7.2v-1.3c-1-.6-1.9-1.8-2.3-3.2-.4-.1-.7-.4-.8-.9-.1-.6.1-1 .7-1.1V4.2C5 1.8 6.5.3 9 .3z" fill="url(#pg)"/></svg><span style="margin-left:9.4px;font-size:17px;font-weight:700;line-height:22px;color:#222;white-space:nowrap;margin-top:0px">User - 6</span></div>
<div class="t" style="top:2141.75px;font-size:29px;line-height:34.8px;color:#2c3e50;font-weight:700;left:1352.0px;width:800px;text-align:center;">0</div>
<div class="t" style="top:2184.08px;font-size:14.5px;line-height:17.4px;color:#6c757d;left:1352.0px;width:800px;text-align:center;">Boxes Operated Today</div>
<div class="abs" style="left:338.0px;top:2237.0px;width:234.5px;height:171px;background:#fff;border-radius:16px;box-shadow:0 3px 14px rgba(20,30,60,.07)"></div>
<div class="abs" style="left:338.00px;top:2246.00px;width:234.5px;height:34px;display:flex;justify-content:center"><div style="height:34px;padding:0 12.6px;border-radius:17px;background:#f0f1f3;color:#4a4f55;padding:0 14.5px;font-size:14.6px;font-weight:700;line-height:36px">#7</div></div>
<div class="abs" style="left:338.00px;top:2298.00px;width:234.5px;height:22px;display:flex;justify-content:center;align-items:flex-start"><svg width="18" height="19" viewBox="0 0 18 19"><defs><linearGradient id="pg" x1="0" y1="0" x2="1" y2="1"><stop offset="0" stop-color="#6b40a8"/><stop offset="1" stop-color="#40257a"/></linearGradient></defs><path d="M9 .3c2.5 0 4 1.5 4 3.9v1.1c.6.1.8.5.7 1.1-.1.5-.4.8-.8.9-.4 1.4-1.3 2.6-2.3 3.2v1.3c3.8.6 6.6 3.3 7.3 7.2H.1c.7-3.9 3.5-6.6 7.3-7.2v-1.3c-1-.6-1.9-1.8-2.3-3.2-.4-.1-.7-.4-.8-.9-.1-.6.1-1 .7-1.1V4.2C5 1.8 6.5.3 9 .3z" fill="url(#pg)"/></svg><span style="margin-left:9.4px;font-size:17px;font-weight:700;line-height:22px;color:#222;white-space:nowrap;margin-top:0px">User - 7</span></div>
<div class="t" style="top:2337.95px;font-size:29px;line-height:34.8px;color:#2c3e50;font-weight:700;left:55.25px;width:800px;text-align:center;">0</div>
<div class="t" style="top:2380.28px;font-size:14.5px;line-height:17.4px;color:#6c757d;left:55.25px;width:800px;text-align:center;">Boxes Operated Today</div>
<div class="abs" style="left:597.35px;top:2237.0px;width:234.5px;height:171px;background:#fff;border-radius:16px;box-shadow:0 3px 14px rgba(20,30,60,.07)"></div>
<div class="abs" style="left:597.35px;top:2246.00px;width:234.5px;height:34px;display:flex;justify-content:center"><div style="height:34px;padding:0 12.6px;border-radius:17px;background:#f0f1f3;color:#4a4f55;padding:0 14.5px;font-size:14.6px;font-weight:700;line-height:36px">#8</div></div>
<div class="abs" style="left:597.35px;top:2298.00px;width:234.5px;height:22px;display:flex;justify-content:center;align-items:flex-start"><svg width="18" height="19" viewBox="0 0 18 19"><defs><linearGradient id="pg" x1="0" y1="0" x2="1" y2="1"><stop offset="0" stop-color="#6b40a8"/><stop offset="1" stop-color="#40257a"/></linearGradient></defs><path d="M9 .3c2.5 0 4 1.5 4 3.9v1.1c.6.1.8.5.7 1.1-.1.5-.4.8-.8.9-.4 1.4-1.3 2.6-2.3 3.2v1.3c3.8.6 6.6 3.3 7.3 7.2H.1c.7-3.9 3.5-6.6 7.3-7.2v-1.3c-1-.6-1.9-1.8-2.3-3.2-.4-.1-.7-.4-.8-.9-.1-.6.1-1 .7-1.1V4.2C5 1.8 6.5.3 9 .3z" fill="url(#pg)"/></svg><span style="margin-left:9.4px;font-size:17px;font-weight:700;line-height:22px;color:#222;white-space:nowrap;margin-top:0px">User - 8</span></div>
<div class="t" style="top:2337.95px;font-size:29px;line-height:34.8px;color:#2c3e50;font-weight:700;left:314.6px;width:800px;text-align:center;">0</div>
<div class="t" style="top:2380.28px;font-size:14.5px;line-height:17.4px;color:#6c757d;left:314.6px;width:800px;text-align:center;">Boxes Operated Today</div>
<div class="abs" style="left:856.7px;top:2237.0px;width:234.5px;height:171px;background:#fff;border-radius:16px;box-shadow:0 3px 14px rgba(20,30,60,.07)"></div>
<div class="abs" style="left:856.70px;top:2246.00px;width:234.5px;height:34px;display:flex;justify-content:center"><div style="height:34px;padding:0 12.6px;border-radius:17px;background:#f0f1f3;color:#4a4f55;padding:0 14.5px;font-size:14.6px;font-weight:700;line-height:36px">#9</div></div>
<div class="abs" style="left:856.70px;top:2298.00px;width:234.5px;height:22px;display:flex;justify-content:center;align-items:flex-start"><svg width="18" height="19" viewBox="0 0 18 19"><defs><linearGradient id="pg" x1="0" y1="0" x2="1" y2="1"><stop offset="0" stop-color="#6b40a8"/><stop offset="1" stop-color="#40257a"/></linearGradient></defs><path d="M9 .3c2.5 0 4 1.5 4 3.9v1.1c.6.1.8.5.7 1.1-.1.5-.4.8-.8.9-.4 1.4-1.3 2.6-2.3 3.2v1.3c3.8.6 6.6 3.3 7.3 7.2H.1c.7-3.9 3.5-6.6 7.3-7.2v-1.3c-1-.6-1.9-1.8-2.3-3.2-.4-.1-.7-.4-.8-.9-.1-.6.1-1 .7-1.1V4.2C5 1.8 6.5.3 9 .3z" fill="url(#pg)"/></svg><span style="margin-left:9.4px;font-size:17px;font-weight:700;line-height:22px;color:#222;white-space:nowrap;margin-top:0px">User - 9</span></div>
<div class="t" style="top:2337.95px;font-size:29px;line-height:34.8px;color:#2c3e50;font-weight:700;left:573.95px;width:800px;text-align:center;">0</div>
<div class="t" style="top:2380.28px;font-size:14.5px;line-height:17.4px;color:#6c757d;left:573.95px;width:800px;text-align:center;">Boxes Operated Today</div>
<div class="abs" style="left:1116.05px;top:2237.0px;width:234.5px;height:171px;background:#fff;border-radius:16px;box-shadow:0 3px 14px rgba(20,30,60,.07)"></div>
<div class="abs" style="left:1116.05px;top:2246.00px;width:234.5px;height:34px;display:flex;justify-content:center"><div style="height:34px;padding:0 12.6px;border-radius:17px;background:#f0f1f3;color:#4a4f55;padding:0 14.5px;font-size:14.6px;font-weight:700;line-height:36px">#10</div></div>
<div class="abs" style="left:1116.05px;top:2298.00px;width:234.5px;height:22px;display:flex;justify-content:center;align-items:flex-start"><svg width="18" height="19" viewBox="0 0 18 19"><defs><linearGradient id="pg" x1="0" y1="0" x2="1" y2="1"><stop offset="0" stop-color="#6b40a8"/><stop offset="1" stop-color="#40257a"/></linearGradient></defs><path d="M9 .3c2.5 0 4 1.5 4 3.9v1.1c.6.1.8.5.7 1.1-.1.5-.4.8-.8.9-.4 1.4-1.3 2.6-2.3 3.2v1.3c3.8.6 6.6 3.3 7.3 7.2H.1c.7-3.9 3.5-6.6 7.3-7.2v-1.3c-1-.6-1.9-1.8-2.3-3.2-.4-.1-.7-.4-.8-.9-.1-.6.1-1 .7-1.1V4.2C5 1.8 6.5.3 9 .3z" fill="url(#pg)"/></svg><span style="margin-left:9.4px;font-size:17px;font-weight:700;line-height:22px;color:#222;white-space:nowrap;margin-top:0px">User - 10</span></div>
<div class="t" style="top:2337.95px;font-size:29px;line-height:34.8px;color:#2c3e50;font-weight:700;left:833.3000000000002px;width:800px;text-align:center;">0</div>
<div class="t" style="top:2380.28px;font-size:14.5px;line-height:17.4px;color:#6c757d;left:833.3000000000002px;width:800px;text-align:center;">Boxes Operated Today</div>
<div class="abs" style="left:1375.4px;top:2237.0px;width:234.5px;height:171px;background:#fff;border-radius:16px;box-shadow:0 3px 14px rgba(20,30,60,.07)"></div>
<div class="abs" style="left:1375.40px;top:2246.00px;width:234.5px;height:34px;display:flex;justify-content:center"><div style="height:34px;padding:0 12.6px;border-radius:17px;background:#f0f1f3;color:#4a4f55;padding:0 14.5px;font-size:14.6px;font-weight:700;line-height:36px">#11</div></div>
<div class="abs" style="left:1375.40px;top:2298.00px;width:234.5px;height:22px;display:flex;justify-content:center;align-items:flex-start"><svg width="18" height="19" viewBox="0 0 18 19"><defs><linearGradient id="pg" x1="0" y1="0" x2="1" y2="1"><stop offset="0" stop-color="#6b40a8"/><stop offset="1" stop-color="#40257a"/></linearGradient></defs><path d="M9 .3c2.5 0 4 1.5 4 3.9v1.1c.6.1.8.5.7 1.1-.1.5-.4.8-.8.9-.4 1.4-1.3 2.6-2.3 3.2v1.3c3.8.6 6.6 3.3 7.3 7.2H.1c.7-3.9 3.5-6.6 7.3-7.2v-1.3c-1-.6-1.9-1.8-2.3-3.2-.4-.1-.7-.4-.8-.9-.1-.6.1-1 .7-1.1V4.2C5 1.8 6.5.3 9 .3z" fill="url(#pg)"/></svg><span style="margin-left:9.4px;font-size:17px;font-weight:700;line-height:22px;color:#222;white-space:nowrap;margin-top:0px">User - 11</span></div>
<div class="t" style="top:2337.95px;font-size:29px;line-height:34.8px;color:#2c3e50;font-weight:700;left:1092.65px;width:800px;text-align:center;">0</div>
<div class="t" style="top:2380.28px;font-size:14.5px;line-height:17.4px;color:#6c757d;left:1092.65px;width:800px;text-align:center;">Boxes Operated Today</div>
<div class="abs" style="left:1634.75px;top:2237.0px;width:234.5px;height:171px;background:#fff;border-radius:16px;box-shadow:0 3px 14px rgba(20,30,60,.07)"></div>
<div class="abs" style="left:1634.75px;top:2246.00px;width:234.5px;height:34px;display:flex;justify-content:center"><div style="height:34px;padding:0 12.6px;border-radius:17px;background:#f0f1f3;color:#4a4f55;padding:0 14.5px;font-size:14.6px;font-weight:700;line-height:36px">#12</div></div>
<div class="abs" style="left:1634.75px;top:2298.00px;width:234.5px;height:22px;display:flex;justify-content:center;align-items:flex-start"><svg width="18" height="19" viewBox="0 0 18 19"><defs><linearGradient id="pg" x1="0" y1="0" x2="1" y2="1"><stop offset="0" stop-color="#6b40a8"/><stop offset="1" stop-color="#40257a"/></linearGradient></defs><path d="M9 .3c2.5 0 4 1.5 4 3.9v1.1c.6.1.8.5.7 1.1-.1.5-.4.8-.8.9-.4 1.4-1.3 2.6-2.3 3.2v1.3c3.8.6 6.6 3.3 7.3 7.2H.1c.7-3.9 3.5-6.6 7.3-7.2v-1.3c-1-.6-1.9-1.8-2.3-3.2-.4-.1-.7-.4-.8-.9-.1-.6.1-1 .7-1.1V4.2C5 1.8 6.5.3 9 .3z" fill="url(#pg)"/></svg><span style="margin-left:9.4px;font-size:17px;font-weight:700;line-height:22px;color:#222;white-space:nowrap;margin-top:0px">User - 12</span></div>
<div class="t" style="top:2337.95px;font-size:29px;line-height:34.8px;color:#2c3e50;font-weight:700;left:1352.0px;width:800px;text-align:center;">0</div>
<div class="t" style="top:2380.28px;font-size:14.5px;line-height:17.4px;color:#6c757d;left:1352.0px;width:800px;text-align:center;">Boxes Operated Today</div>
<div class="abs" style="left:338.0px;top:2433.2px;width:234.5px;height:171px;background:#fff;border-radius:16px;box-shadow:0 3px 14px rgba(20,30,60,.07)"></div>
<div class="abs" style="left:338.00px;top:2442.20px;width:234.5px;height:34px;display:flex;justify-content:center"><div style="height:34px;padding:0 12.6px;border-radius:17px;background:#f0f1f3;color:#4a4f55;padding:0 14.5px;font-size:14.6px;font-weight:700;line-height:36px">#13</div></div>
<div class="abs" style="left:338.00px;top:2494.20px;width:234.5px;height:22px;display:flex;justify-content:center;align-items:flex-start"><svg width="18" height="19" viewBox="0 0 18 19"><defs><linearGradient id="pg" x1="0" y1="0" x2="1" y2="1"><stop offset="0" stop-color="#6b40a8"/><stop offset="1" stop-color="#40257a"/></linearGradient></defs><path d="M9 .3c2.5 0 4 1.5 4 3.9v1.1c.6.1.8.5.7 1.1-.1.5-.4.8-.8.9-.4 1.4-1.3 2.6-2.3 3.2v1.3c3.8.6 6.6 3.3 7.3 7.2H.1c.7-3.9 3.5-6.6 7.3-7.2v-1.3c-1-.6-1.9-1.8-2.3-3.2-.4-.1-.7-.4-.8-.9-.1-.6.1-1 .7-1.1V4.2C5 1.8 6.5.3 9 .3z" fill="url(#pg)"/></svg><span style="margin-left:9.4px;font-size:17px;font-weight:700;line-height:22px;color:#222;white-space:nowrap;margin-top:0px">User - 13</span></div>
<div class="t" style="top:2534.15px;font-size:29px;line-height:34.8px;color:#2c3e50;font-weight:700;left:55.25px;width:800px;text-align:center;">0</div>
<div class="t" style="top:2576.48px;font-size:14.5px;line-height:17.4px;color:#6c757d;left:55.25px;width:800px;text-align:center;">Boxes Operated Today</div>
<div class="abs" style="left:597.35px;top:2433.2px;width:234.5px;height:171px;background:#fff;border-radius:16px;box-shadow:0 3px 14px rgba(20,30,60,.07)"></div>
<div class="abs" style="left:597.35px;top:2442.20px;width:234.5px;height:34px;display:flex;justify-content:center"><div style="height:34px;padding:0 12.6px;border-radius:17px;background:#f0f1f3;color:#4a4f55;padding:0 14.5px;font-size:14.6px;font-weight:700;line-height:36px">#14</div></div>
<div class="abs" style="left:597.35px;top:2494.20px;width:234.5px;height:22px;display:flex;justify-content:center;align-items:flex-start"><svg width="18" height="19" viewBox="0 0 18 19"><defs><linearGradient id="pg" x1="0" y1="0" x2="1" y2="1"><stop offset="0" stop-color="#6b40a8"/><stop offset="1" stop-color="#40257a"/></linearGradient></defs><path d="M9 .3c2.5 0 4 1.5 4 3.9v1.1c.6.1.8.5.7 1.1-.1.5-.4.8-.8.9-.4 1.4-1.3 2.6-2.3 3.2v1.3c3.8.6 6.6 3.3 7.3 7.2H.1c.7-3.9 3.5-6.6 7.3-7.2v-1.3c-1-.6-1.9-1.8-2.3-3.2-.4-.1-.7-.4-.8-.9-.1-.6.1-1 .7-1.1V4.2C5 1.8 6.5.3 9 .3z" fill="url(#pg)"/></svg><span style="margin-left:9.4px;font-size:17px;font-weight:700;line-height:22px;color:#222;white-space:nowrap;margin-top:0px">User - 14</span></div>
<div class="t" style="top:2534.15px;font-size:29px;line-height:34.8px;color:#2c3e50;font-weight:700;left:314.6px;width:800px;text-align:center;">0</div>
<div class="t" style="top:2576.48px;font-size:14.5px;line-height:17.4px;color:#6c757d;left:314.6px;width:800px;text-align:center;">Boxes Operated Today</div>
<div class="abs" style="left:856.7px;top:2433.2px;width:234.5px;height:171px;background:#fff;border-radius:16px;box-shadow:0 3px 14px rgba(20,30,60,.07)"></div>
<div class="abs" style="left:856.70px;top:2442.20px;width:234.5px;height:34px;display:flex;justify-content:center"><div style="height:34px;padding:0 12.6px;border-radius:17px;background:#f0f1f3;color:#4a4f55;padding:0 14.5px;font-size:14.6px;font-weight:700;line-height:36px">#15</div></div>
<div class="abs" style="left:856.70px;top:2494.20px;width:234.5px;height:22px;display:flex;justify-content:center;align-items:flex-start"><svg width="18" height="19" viewBox="0 0 18 19"><defs><linearGradient id="pg" x1="0" y1="0" x2="1" y2="1"><stop offset="0" stop-color="#6b40a8"/><stop offset="1" stop-color="#40257a"/></linearGradient></defs><path d="M9 .3c2.5 0 4 1.5 4 3.9v1.1c.6.1.8.5.7 1.1-.1.5-.4.8-.8.9-.4 1.4-1.3 2.6-2.3 3.2v1.3c3.8.6 6.6 3.3 7.3 7.2H.1c.7-3.9 3.5-6.6 7.3-7.2v-1.3c-1-.6-1.9-1.8-2.3-3.2-.4-.1-.7-.4-.8-.9-.1-.6.1-1 .7-1.1V4.2C5 1.8 6.5.3 9 .3z" fill="url(#pg)"/></svg><span style="margin-left:9.4px;font-size:17px;font-weight:700;line-height:22px;color:#222;white-space:nowrap;margin-top:0px">User - 15</span></div>
<div class="t" style="top:2534.15px;font-size:29px;line-height:34.8px;color:#2c3e50;font-weight:700;left:573.95px;width:800px;text-align:center;">0</div>
<div class="t" style="top:2576.48px;font-size:14.5px;line-height:17.4px;color:#6c757d;left:573.95px;width:800px;text-align:center;">Boxes Operated Today</div>
<div class="abs" style="left:1116.05px;top:2433.2px;width:234.5px;height:171px;background:#fff;border-radius:16px;box-shadow:0 3px 14px rgba(20,30,60,.07)"></div>
<div class="abs" style="left:1116.05px;top:2442.20px;width:234.5px;height:34px;display:flex;justify-content:center"><div style="height:34px;padding:0 12.6px;border-radius:17px;background:#f0f1f3;color:#4a4f55;padding:0 14.5px;font-size:14.6px;font-weight:700;line-height:36px">#16</div></div>
<div class="abs" style="left:1116.05px;top:2494.20px;width:234.5px;height:22px;display:flex;justify-content:center;align-items:flex-start"><svg width="18" height="19" viewBox="0 0 18 19"><defs><linearGradient id="pg" x1="0" y1="0" x2="1" y2="1"><stop offset="0" stop-color="#6b40a8"/><stop offset="1" stop-color="#40257a"/></linearGradient></defs><path d="M9 .3c2.5 0 4 1.5 4 3.9v1.1c.6.1.8.5.7 1.1-.1.5-.4.8-.8.9-.4 1.4-1.3 2.6-2.3 3.2v1.3c3.8.6 6.6 3.3 7.3 7.2H.1c.7-3.9 3.5-6.6 7.3-7.2v-1.3c-1-.6-1.9-1.8-2.3-3.2-.4-.1-.7-.4-.8-.9-.1-.6.1-1 .7-1.1V4.2C5 1.8 6.5.3 9 .3z" fill="url(#pg)"/></svg><span style="margin-left:9.4px;font-size:17px;font-weight:700;line-height:22px;color:#222;white-space:nowrap;margin-top:0px">User - 16</span></div>
<div class="t" style="top:2534.15px;font-size:29px;line-height:34.8px;color:#2c3e50;font-weight:700;left:833.3000000000002px;width:800px;text-align:center;">0</div>
<div class="t" style="top:2576.48px;font-size:14.5px;line-height:17.4px;color:#6c757d;left:833.3000000000002px;width:800px;text-align:center;">Boxes Operated Today</div>
<div class="abs" style="left:1375.4px;top:2433.2px;width:234.5px;height:171px;background:#fff;border-radius:16px;box-shadow:0 3px 14px rgba(20,30,60,.07)"></div>
<div class="abs" style="left:1375.40px;top:2442.20px;width:234.5px;height:34px;display:flex;justify-content:center"><div style="height:34px;padding:0 12.6px;border-radius:17px;background:#f0f1f3;color:#4a4f55;padding:0 14.5px;font-size:14.6px;font-weight:700;line-height:36px">#17</div></div>
<div class="abs" style="left:1375.40px;top:2494.20px;width:234.5px;height:22px;display:flex;justify-content:center;align-items:flex-start"><svg width="18" height="19" viewBox="0 0 18 19"><defs><linearGradient id="pg" x1="0" y1="0" x2="1" y2="1"><stop offset="0" stop-color="#6b40a8"/><stop offset="1" stop-color="#40257a"/></linearGradient></defs><path d="M9 .3c2.5 0 4 1.5 4 3.9v1.1c.6.1.8.5.7 1.1-.1.5-.4.8-.8.9-.4 1.4-1.3 2.6-2.3 3.2v1.3c3.8.6 6.6 3.3 7.3 7.2H.1c.7-3.9 3.5-6.6 7.3-7.2v-1.3c-1-.6-1.9-1.8-2.3-3.2-.4-.1-.7-.4-.8-.9-.1-.6.1-1 .7-1.1V4.2C5 1.8 6.5.3 9 .3z" fill="url(#pg)"/></svg><span style="margin-left:9.4px;font-size:17px;font-weight:700;line-height:22px;color:#222;white-space:nowrap;margin-top:0px">User - 17</span></div>
<div class="t" style="top:2534.15px;font-size:29px;line-height:34.8px;color:#2c3e50;font-weight:700;left:1092.65px;width:800px;text-align:center;">0</div>
<div class="t" style="top:2576.48px;font-size:14.5px;line-height:17.4px;color:#6c757d;left:1092.65px;width:800px;text-align:center;">Boxes Operated Today</div>
<div class="abs" style="left:1634.75px;top:2433.2px;width:234.5px;height:171px;background:#fff;border-radius:16px;box-shadow:0 3px 14px rgba(20,30,60,.07)"></div>
<div class="abs" style="left:1634.75px;top:2442.20px;width:234.5px;height:34px;display:flex;justify-content:center"><div style="height:34px;padding:0 12.6px;border-radius:17px;background:#f0f1f3;color:#4a4f55;padding:0 14.5px;font-size:14.6px;font-weight:700;line-height:36px">#18</div></div>
<div class="abs" style="left:1634.75px;top:2494.20px;width:234.5px;height:22px;display:flex;justify-content:center;align-items:flex-start"><svg width="18" height="19" viewBox="0 0 18 19"><defs><linearGradient id="pg" x1="0" y1="0" x2="1" y2="1"><stop offset="0" stop-color="#6b40a8"/><stop offset="1" stop-color="#40257a"/></linearGradient></defs><path d="M9 .3c2.5 0 4 1.5 4 3.9v1.1c.6.1.8.5.7 1.1-.1.5-.4.8-.8.9-.4 1.4-1.3 2.6-2.3 3.2v1.3c3.8.6 6.6 3.3 7.3 7.2H.1c.7-3.9 3.5-6.6 7.3-7.2v-1.3c-1-.6-1.9-1.8-2.3-3.2-.4-.1-.7-.4-.8-.9-.1-.6.1-1 .7-1.1V4.2C5 1.8 6.5.3 9 .3z" fill="url(#pg)"/></svg><span style="margin-left:9.4px;font-size:17px;font-weight:700;line-height:22px;color:#222;white-space:nowrap;margin-top:0px">User - 18</span></div>
<div class="t" style="top:2534.15px;font-size:29px;line-height:34.8px;color:#2c3e50;font-weight:700;left:1352.0px;width:800px;text-align:center;">0</div>
<div class="t" style="top:2576.48px;font-size:14.5px;line-height:17.4px;color:#6c757d;left:1352.0px;width:800px;text-align:center;">Boxes Operated Today</div>
<div class="abs" style="left:338.0px;top:2629.4px;width:234.5px;height:171px;background:#fff;border-radius:16px;box-shadow:0 3px 14px rgba(20,30,60,.07)"></div>
<div class="abs" style="left:338.00px;top:2638.40px;width:234.5px;height:34px;display:flex;justify-content:center"><div style="height:34px;padding:0 12.6px;border-radius:17px;background:#f0f1f3;color:#4a4f55;padding:0 14.5px;font-size:14.6px;font-weight:700;line-height:36px">#19</div></div>
<div class="abs" style="left:338.00px;top:2690.40px;width:234.5px;height:22px;display:flex;justify-content:center;align-items:flex-start"><svg width="18" height="19" viewBox="0 0 18 19"><defs><linearGradient id="pg" x1="0" y1="0" x2="1" y2="1"><stop offset="0" stop-color="#6b40a8"/><stop offset="1" stop-color="#40257a"/></linearGradient></defs><path d="M9 .3c2.5 0 4 1.5 4 3.9v1.1c.6.1.8.5.7 1.1-.1.5-.4.8-.8.9-.4 1.4-1.3 2.6-2.3 3.2v1.3c3.8.6 6.6 3.3 7.3 7.2H.1c.7-3.9 3.5-6.6 7.3-7.2v-1.3c-1-.6-1.9-1.8-2.3-3.2-.4-.1-.7-.4-.8-.9-.1-.6.1-1 .7-1.1V4.2C5 1.8 6.5.3 9 .3z" fill="url(#pg)"/></svg><span style="margin-left:9.4px;font-size:17px;font-weight:700;line-height:22px;color:#222;white-space:nowrap;margin-top:0px">User - 19</span></div>
<div class="t" style="top:2730.35px;font-size:29px;line-height:34.8px;color:#2c3e50;font-weight:700;left:55.25px;width:800px;text-align:center;">0</div>
<div class="t" style="top:2772.68px;font-size:14.5px;line-height:17.4px;color:#6c757d;left:55.25px;width:800px;text-align:center;">Boxes Operated Today</div>
<div class="abs" style="left:597.35px;top:2629.4px;width:234.5px;height:171px;background:#fff;border-radius:16px;box-shadow:0 3px 14px rgba(20,30,60,.07)"></div>
<div class="abs" style="left:597.35px;top:2638.40px;width:234.5px;height:34px;display:flex;justify-content:center"><div style="height:34px;padding:0 12.6px;border-radius:17px;background:#f0f1f3;color:#4a4f55;padding:0 14.5px;font-size:14.6px;font-weight:700;line-height:36px">#20</div></div>
<div class="abs" style="left:597.35px;top:2690.40px;width:234.5px;height:22px;display:flex;justify-content:center;align-items:flex-start"><svg width="18" height="19" viewBox="0 0 18 19"><defs><linearGradient id="pg" x1="0" y1="0" x2="1" y2="1"><stop offset="0" stop-color="#6b40a8"/><stop offset="1" stop-color="#40257a"/></linearGradient></defs><path d="M9 .3c2.5 0 4 1.5 4 3.9v1.1c.6.1.8.5.7 1.1-.1.5-.4.8-.8.9-.4 1.4-1.3 2.6-2.3 3.2v1.3c3.8.6 6.6 3.3 7.3 7.2H.1c.7-3.9 3.5-6.6 7.3-7.2v-1.3c-1-.6-1.9-1.8-2.3-3.2-.4-.1-.7-.4-.8-.9-.1-.6.1-1 .7-1.1V4.2C5 1.8 6.5.3 9 .3z" fill="url(#pg)"/></svg><span style="margin-left:9.4px;font-size:17px;font-weight:700;line-height:22px;color:#222;white-space:nowrap;margin-top:0px">User - 20</span></div>
<div class="t" style="top:2730.35px;font-size:29px;line-height:34.8px;color:#2c3e50;font-weight:700;left:314.6px;width:800px;text-align:center;">0</div>
<div class="t" style="top:2772.68px;font-size:14.5px;line-height:17.4px;color:#6c757d;left:314.6px;width:800px;text-align:center;">Boxes Operated Today</div>
<div class="abs" style="left:856.7px;top:2629.4px;width:234.5px;height:171px;background:#fff;border-radius:16px;box-shadow:0 3px 14px rgba(20,30,60,.07)"></div>
<div class="abs" style="left:856.70px;top:2638.40px;width:234.5px;height:34px;display:flex;justify-content:center"><div style="height:34px;padding:0 12.6px;border-radius:17px;background:#f0f1f3;color:#4a4f55;padding:0 14.5px;font-size:14.6px;font-weight:700;line-height:36px">#21</div></div>
<div class="abs" style="left:856.70px;top:2690.40px;width:234.5px;height:22px;display:flex;justify-content:center;align-items:flex-start"><svg width="18" height="19" viewBox="0 0 18 19"><defs><linearGradient id="pg" x1="0" y1="0" x2="1" y2="1"><stop offset="0" stop-color="#6b40a8"/><stop offset="1" stop-color="#40257a"/></linearGradient></defs><path d="M9 .3c2.5 0 4 1.5 4 3.9v1.1c.6.1.8.5.7 1.1-.1.5-.4.8-.8.9-.4 1.4-1.3 2.6-2.3 3.2v1.3c3.8.6 6.6 3.3 7.3 7.2H.1c.7-3.9 3.5-6.6 7.3-7.2v-1.3c-1-.6-1.9-1.8-2.3-3.2-.4-.1-.7-.4-.8-.9-.1-.6.1-1 .7-1.1V4.2C5 1.8 6.5.3 9 .3z" fill="url(#pg)"/></svg><span style="margin-left:9.4px;font-size:17px;font-weight:700;line-height:22px;color:#222;white-space:nowrap;margin-top:0px">User - 21</span></div>
<div class="t" style="top:2730.35px;font-size:29px;line-height:34.8px;color:#2c3e50;font-weight:700;left:573.95px;width:800px;text-align:center;">0</div>
<div class="t" style="top:2772.68px;font-size:14.5px;line-height:17.4px;color:#6c757d;left:573.95px;width:800px;text-align:center;">Boxes Operated Today</div>
<div class="abs" style="left:1116.05px;top:2629.4px;width:234.5px;height:171px;background:#fff;border-radius:16px;box-shadow:0 3px 14px rgba(20,30,60,.07)"></div>
<div class="abs" style="left:1116.05px;top:2638.40px;width:234.5px;height:34px;display:flex;justify-content:center"><div style="height:34px;padding:0 12.6px;border-radius:17px;background:#f0f1f3;color:#4a4f55;padding:0 14.5px;font-size:14.6px;font-weight:700;line-height:36px">#22</div></div>
<div class="abs" style="left:1116.05px;top:2690.40px;width:234.5px;height:22px;display:flex;justify-content:center;align-items:flex-start"><svg width="18" height="19" viewBox="0 0 18 19"><defs><linearGradient id="pg" x1="0" y1="0" x2="1" y2="1"><stop offset="0" stop-color="#6b40a8"/><stop offset="1" stop-color="#40257a"/></linearGradient></defs><path d="M9 .3c2.5 0 4 1.5 4 3.9v1.1c.6.1.8.5.7 1.1-.1.5-.4.8-.8.9-.4 1.4-1.3 2.6-2.3 3.2v1.3c3.8.6 6.6 3.3 7.3 7.2H.1c.7-3.9 3.5-6.6 7.3-7.2v-1.3c-1-.6-1.9-1.8-2.3-3.2-.4-.1-.7-.4-.8-.9-.1-.6.1-1 .7-1.1V4.2C5 1.8 6.5.3 9 .3z" fill="url(#pg)"/></svg><span style="margin-left:9.4px;font-size:17px;font-weight:700;line-height:22px;color:#222;white-space:nowrap;margin-top:0px">User - 22</span></div>
<div class="t" style="top:2730.35px;font-size:29px;line-height:34.8px;color:#2c3e50;font-weight:700;left:833.3000000000002px;width:800px;text-align:center;">0</div>
<div class="t" style="top:2772.68px;font-size:14.5px;line-height:17.4px;color:#6c757d;left:833.3000000000002px;width:800px;text-align:center;">Boxes Operated Today</div>
<div class="abs" style="left:1375.4px;top:2629.4px;width:234.5px;height:171px;background:#fff;border-radius:16px;box-shadow:0 3px 14px rgba(20,30,60,.07)"></div>
<div class="abs" style="left:1375.40px;top:2638.40px;width:234.5px;height:34px;display:flex;justify-content:center"><div style="height:34px;padding:0 12.6px;border-radius:17px;background:#f0f1f3;color:#4a4f55;padding:0 14.5px;font-size:14.6px;font-weight:700;line-height:36px">#23</div></div>
<div class="abs" style="left:1375.40px;top:2690.40px;width:234.5px;height:22px;display:flex;justify-content:center;align-items:flex-start"><svg width="18" height="19" viewBox="0 0 18 19"><defs><linearGradient id="pg" x1="0" y1="0" x2="1" y2="1"><stop offset="0" stop-color="#6b40a8"/><stop offset="1" stop-color="#40257a"/></linearGradient></defs><path d="M9 .3c2.5 0 4 1.5 4 3.9v1.1c.6.1.8.5.7 1.1-.1.5-.4.8-.8.9-.4 1.4-1.3 2.6-2.3 3.2v1.3c3.8.6 6.6 3.3 7.3 7.2H.1c.7-3.9 3.5-6.6 7.3-7.2v-1.3c-1-.6-1.9-1.8-2.3-3.2-.4-.1-.7-.4-.8-.9-.1-.6.1-1 .7-1.1V4.2C5 1.8 6.5.3 9 .3z" fill="url(#pg)"/></svg><span style="margin-left:9.4px;font-size:17px;font-weight:700;line-height:22px;color:#222;white-space:nowrap;margin-top:0px">User - 23</span></div>
<div class="t" style="top:2730.35px;font-size:29px;line-height:34.8px;color:#2c3e50;font-weight:700;left:1092.65px;width:800px;text-align:center;">0</div>
<div class="t" style="top:2772.68px;font-size:14.5px;line-height:17.4px;color:#6c757d;left:1092.65px;width:800px;text-align:center;">Boxes Operated Today</div>
<div class="abs" style="left:1634.75px;top:2629.4px;width:234.5px;height:171px;background:#fff;border-radius:16px;box-shadow:0 3px 14px rgba(20,30,60,.07)"></div>
<div class="abs" style="left:1634.75px;top:2638.40px;width:234.5px;height:34px;display:flex;justify-content:center"><div style="height:34px;padding:0 12.6px;border-radius:17px;background:#f0f1f3;color:#4a4f55;padding:0 14.5px;font-size:14.6px;font-weight:700;line-height:36px">#24</div></div>
<div class="abs" style="left:1634.75px;top:2690.40px;width:234.5px;height:22px;display:flex;justify-content:center;align-items:flex-start"><svg width="18" height="19" viewBox="0 0 18 19"><defs><linearGradient id="pg" x1="0" y1="0" x2="1" y2="1"><stop offset="0" stop-color="#6b40a8"/><stop offset="1" stop-color="#40257a"/></linearGradient></defs><path d="M9 .3c2.5 0 4 1.5 4 3.9v1.1c.6.1.8.5.7 1.1-.1.5-.4.8-.8.9-.4 1.4-1.3 2.6-2.3 3.2v1.3c3.8.6 6.6 3.3 7.3 7.2H.1c.7-3.9 3.5-6.6 7.3-7.2v-1.3c-1-.6-1.9-1.8-2.3-3.2-.4-.1-.7-.4-.8-.9-.1-.6.1-1 .7-1.1V4.2C5 1.8 6.5.3 9 .3z" fill="url(#pg)"/></svg><span style="margin-left:9.4px;font-size:17px;font-weight:700;line-height:22px;color:#222;white-space:nowrap;margin-top:0px">User - 24</span></div>
<div class="t" style="top:2730.35px;font-size:29px;line-height:34.8px;color:#2c3e50;font-weight:700;left:1352.0px;width:800px;text-align:center;">0</div>
<div class="t" style="top:2772.68px;font-size:14.5px;line-height:17.4px;color:#6c757d;left:1352.0px;width:800px;text-align:center;">Boxes Operated Today</div>
<div class="abs" style="left:338.0px;top:2825.6px;width:234.5px;height:171px;background:#fff;border-radius:16px;box-shadow:0 3px 14px rgba(20,30,60,.07)"></div>
<div class="abs" style="left:338.00px;top:2834.60px;width:234.5px;height:34px;display:flex;justify-content:center"><div style="height:34px;padding:0 12.6px;border-radius:17px;background:#f0f1f3;color:#4a4f55;padding:0 14.5px;font-size:14.6px;font-weight:700;line-height:36px">#25</div></div>
<div class="abs" style="left:338.00px;top:2886.60px;width:234.5px;height:22px;display:flex;justify-content:center;align-items:flex-start"><svg width="18" height="19" viewBox="0 0 18 19"><defs><linearGradient id="pg" x1="0" y1="0" x2="1" y2="1"><stop offset="0" stop-color="#6b40a8"/><stop offset="1" stop-color="#40257a"/></linearGradient></defs><path d="M9 .3c2.5 0 4 1.5 4 3.9v1.1c.6.1.8.5.7 1.1-.1.5-.4.8-.8.9-.4 1.4-1.3 2.6-2.3 3.2v1.3c3.8.6 6.6 3.3 7.3 7.2H.1c.7-3.9 3.5-6.6 7.3-7.2v-1.3c-1-.6-1.9-1.8-2.3-3.2-.4-.1-.7-.4-.8-.9-.1-.6.1-1 .7-1.1V4.2C5 1.8 6.5.3 9 .3z" fill="url(#pg)"/></svg><span style="margin-left:9.4px;font-size:17px;font-weight:700;line-height:22px;color:#222;white-space:nowrap;margin-top:0px">User - 25</span></div>
<div class="t" style="top:2926.55px;font-size:29px;line-height:34.8px;color:#2c3e50;font-weight:700;left:55.25px;width:800px;text-align:center;">0</div>
<div class="t" style="top:2968.88px;font-size:14.5px;line-height:17.4px;color:#6c757d;left:55.25px;width:800px;text-align:center;">Boxes Operated Today</div>
<div class="abs" style="left:597.35px;top:2825.6px;width:234.5px;height:171px;background:#fff;border-radius:16px;box-shadow:0 3px 14px rgba(20,30,60,.07)"></div>
<div class="abs" style="left:597.35px;top:2834.60px;width:234.5px;height:34px;display:flex;justify-content:center"><div style="height:34px;padding:0 12.6px;border-radius:17px;background:#f0f1f3;color:#4a4f55;padding:0 14.5px;font-size:14.6px;font-weight:700;line-height:36px">#26</div></div>
<div class="abs" style="left:597.35px;top:2886.60px;width:234.5px;height:22px;display:flex;justify-content:center;align-items:flex-start"><svg width="18" height="19" viewBox="0 0 18 19"><defs><linearGradient id="pg" x1="0" y1="0" x2="1" y2="1"><stop offset="0" stop-color="#6b40a8"/><stop offset="1" stop-color="#40257a"/></linearGradient></defs><path d="M9 .3c2.5 0 4 1.5 4 3.9v1.1c.6.1.8.5.7 1.1-.1.5-.4.8-.8.9-.4 1.4-1.3 2.6-2.3 3.2v1.3c3.8.6 6.6 3.3 7.3 7.2H.1c.7-3.9 3.5-6.6 7.3-7.2v-1.3c-1-.6-1.9-1.8-2.3-3.2-.4-.1-.7-.4-.8-.9-.1-.6.1-1 .7-1.1V4.2C5 1.8 6.5.3 9 .3z" fill="url(#pg)"/></svg><span style="margin-left:9.4px;font-size:17px;font-weight:700;line-height:22px;color:#222;white-space:nowrap;margin-top:0px">User - 26</span></div>
<div class="t" style="top:2926.55px;font-size:29px;line-height:34.8px;color:#2c3e50;font-weight:700;left:314.6px;width:800px;text-align:center;">0</div>
<div class="t" style="top:2968.88px;font-size:14.5px;line-height:17.4px;color:#6c757d;left:314.6px;width:800px;text-align:center;">Boxes Operated Today</div>
<div class="abs" style="left:856.7px;top:2825.6px;width:234.5px;height:171px;background:#fff;border-radius:16px;box-shadow:0 3px 14px rgba(20,30,60,.07)"></div>
<div class="abs" style="left:856.70px;top:2834.60px;width:234.5px;height:34px;display:flex;justify-content:center"><div style="height:34px;padding:0 12.6px;border-radius:17px;background:#f0f1f3;color:#4a4f55;padding:0 14.5px;font-size:14.6px;font-weight:700;line-height:36px">#27</div></div>
<div class="abs" style="left:856.70px;top:2886.60px;width:234.5px;height:22px;display:flex;justify-content:center;align-items:flex-start"><svg width="18" height="19" viewBox="0 0 18 19"><defs><linearGradient id="pg" x1="0" y1="0" x2="1" y2="1"><stop offset="0" stop-color="#6b40a8"/><stop offset="1" stop-color="#40257a"/></linearGradient></defs><path d="M9 .3c2.5 0 4 1.5 4 3.9v1.1c.6.1.8.5.7 1.1-.1.5-.4.8-.8.9-.4 1.4-1.3 2.6-2.3 3.2v1.3c3.8.6 6.6 3.3 7.3 7.2H.1c.7-3.9 3.5-6.6 7.3-7.2v-1.3c-1-.6-1.9-1.8-2.3-3.2-.4-.1-.7-.4-.8-.9-.1-.6.1-1 .7-1.1V4.2C5 1.8 6.5.3 9 .3z" fill="url(#pg)"/></svg><span style="margin-left:9.4px;font-size:17px;font-weight:700;line-height:22px;color:#222;white-space:nowrap;margin-top:0px">User - 27</span></div>
<div class="t" style="top:2926.55px;font-size:29px;line-height:34.8px;color:#2c3e50;font-weight:700;left:573.95px;width:800px;text-align:center;">0</div>
<div class="t" style="top:2968.88px;font-size:14.5px;line-height:17.4px;color:#6c757d;left:573.95px;width:800px;text-align:center;">Boxes Operated Today</div>
<div class="abs" style="left:1116.05px;top:2825.6px;width:234.5px;height:171px;background:#fff;border-radius:16px;box-shadow:0 3px 14px rgba(20,30,60,.07)"></div>
<div class="abs" style="left:1116.05px;top:2834.60px;width:234.5px;height:34px;display:flex;justify-content:center"><div style="height:34px;padding:0 12.6px;border-radius:17px;background:#f0f1f3;color:#4a4f55;padding:0 14.5px;font-size:14.6px;font-weight:700;line-height:36px">#28</div></div>
<div class="abs" style="left:1116.05px;top:2886.60px;width:234.5px;height:22px;display:flex;justify-content:center;align-items:flex-start"><svg width="18" height="19" viewBox="0 0 18 19"><defs><linearGradient id="pg" x1="0" y1="0" x2="1" y2="1"><stop offset="0" stop-color="#6b40a8"/><stop offset="1" stop-color="#40257a"/></linearGradient></defs><path d="M9 .3c2.5 0 4 1.5 4 3.9v1.1c.6.1.8.5.7 1.1-.1.5-.4.8-.8.9-.4 1.4-1.3 2.6-2.3 3.2v1.3c3.8.6 6.6 3.3 7.3 7.2H.1c.7-3.9 3.5-6.6 7.3-7.2v-1.3c-1-.6-1.9-1.8-2.3-3.2-.4-.1-.7-.4-.8-.9-.1-.6.1-1 .7-1.1V4.2C5 1.8 6.5.3 9 .3z" fill="url(#pg)"/></svg><span style="margin-left:9.4px;font-size:17px;font-weight:700;line-height:22px;color:#222;white-space:nowrap;margin-top:0px">User - 28</span></div>
<div class="t" style="top:2926.55px;font-size:29px;line-height:34.8px;color:#2c3e50;font-weight:700;left:833.3000000000002px;width:800px;text-align:center;">0</div>
<div class="t" style="top:2968.88px;font-size:14.5px;line-height:17.4px;color:#6c757d;left:833.3000000000002px;width:800px;text-align:center;">Boxes Operated Today</div>
<div class="abs" style="left:1375.4px;top:2825.6px;width:234.5px;height:171px;background:#fff;border-radius:16px;box-shadow:0 3px 14px rgba(20,30,60,.07)"></div>
<div class="abs" style="left:1375.40px;top:2834.60px;width:234.5px;height:34px;display:flex;justify-content:center"><div style="height:34px;padding:0 12.6px;border-radius:17px;background:#f0f1f3;color:#4a4f55;padding:0 14.5px;font-size:14.6px;font-weight:700;line-height:36px">#29</div></div>
<div class="abs" style="left:1375.40px;top:2886.60px;width:234.5px;height:22px;display:flex;justify-content:center;align-items:flex-start"><svg width="18" height="19" viewBox="0 0 18 19"><defs><linearGradient id="pg" x1="0" y1="0" x2="1" y2="1"><stop offset="0" stop-color="#6b40a8"/><stop offset="1" stop-color="#40257a"/></linearGradient></defs><path d="M9 .3c2.5 0 4 1.5 4 3.9v1.1c.6.1.8.5.7 1.1-.1.5-.4.8-.8.9-.4 1.4-1.3 2.6-2.3 3.2v1.3c3.8.6 6.6 3.3 7.3 7.2H.1c.7-3.9 3.5-6.6 7.3-7.2v-1.3c-1-.6-1.9-1.8-2.3-3.2-.4-.1-.7-.4-.8-.9-.1-.6.1-1 .7-1.1V4.2C5 1.8 6.5.3 9 .3z" fill="url(#pg)"/></svg><span style="margin-left:9.4px;font-size:17px;font-weight:700;line-height:22px;color:#222;white-space:nowrap;margin-top:0px">User - 29</span></div>
<div class="t" style="top:2926.55px;font-size:29px;line-height:34.8px;color:#2c3e50;font-weight:700;left:1092.65px;width:800px;text-align:center;">0</div>
<div class="t" style="top:2968.88px;font-size:14.5px;line-height:17.4px;color:#6c757d;left:1092.65px;width:800px;text-align:center;">Boxes Operated Today</div>
<div class="abs" style="left:1634.75px;top:2825.6px;width:234.5px;height:171px;background:#fff;border-radius:16px;box-shadow:0 3px 14px rgba(20,30,60,.07)"></div>
<div class="abs" style="left:1634.75px;top:2834.60px;width:234.5px;height:34px;display:flex;justify-content:center"><div style="height:34px;padding:0 12.6px;border-radius:17px;background:#f0f1f3;color:#4a4f55;padding:0 14.5px;font-size:14.6px;font-weight:700;line-height:36px">#30</div></div>
<div class="abs" style="left:1634.75px;top:2886.60px;width:234.5px;height:22px;display:flex;justify-content:center;align-items:flex-start"><svg width="18" height="19" viewBox="0 0 18 19"><defs><linearGradient id="pg" x1="0" y1="0" x2="1" y2="1"><stop offset="0" stop-color="#6b40a8"/><stop offset="1" stop-color="#40257a"/></linearGradient></defs><path d="M9 .3c2.5 0 4 1.5 4 3.9v1.1c.6.1.8.5.7 1.1-.1.5-.4.8-.8.9-.4 1.4-1.3 2.6-2.3 3.2v1.3c3.8.6 6.6 3.3 7.3 7.2H.1c.7-3.9 3.5-6.6 7.3-7.2v-1.3c-1-.6-1.9-1.8-2.3-3.2-.4-.1-.7-.4-.8-.9-.1-.6.1-1 .7-1.1V4.2C5 1.8 6.5.3 9 .3z" fill="url(#pg)"/></svg><span style="margin-left:9.4px;font-size:17px;font-weight:700;line-height:22px;color:#222;white-space:nowrap;margin-top:0px">User - 30</span></div>
<div class="t" style="top:2926.55px;font-size:29px;line-height:34.8px;color:#2c3e50;font-weight:700;left:1352.0px;width:800px;text-align:center;">0</div>
<div class="t" style="top:2968.88px;font-size:14.5px;line-height:17.4px;color:#6c757d;left:1352.0px;width:800px;text-align:center;">Boxes Operated Today</div>
<div class="abs" style="left:288px;top:3047px;width:1632px;height:65px;background:#fff;border-top:1px solid #d6dbe1"></div>
<div class="t" style="top:3070.24px;font-size:17.5px;line-height:21.0px;color:#333;left:703.5px;width:800px;text-align:center;"><b>Qutu İdarəetməsi</b> © Bütün huquqlar qorunur.</div></div><!--/main-->

</body>
</html>
